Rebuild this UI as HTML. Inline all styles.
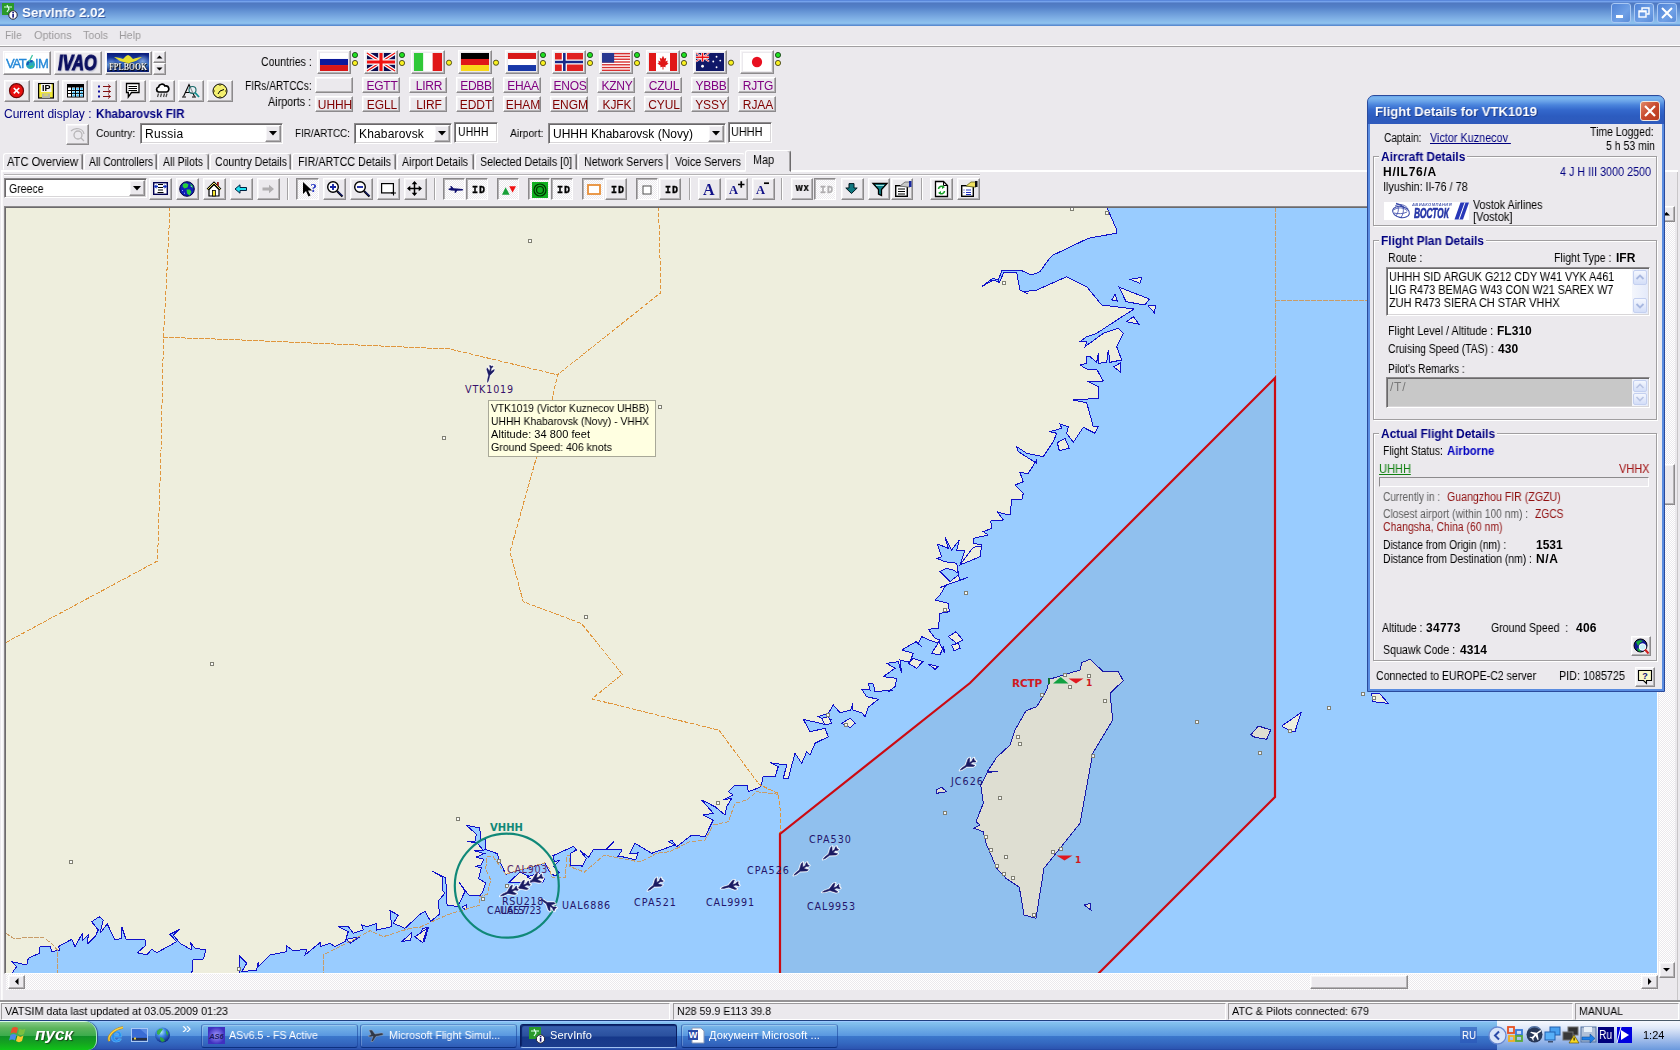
<!DOCTYPE html>
<html lang="ru"><head><meta charset="utf-8"><title>ServInfo 2.02</title>
<style>
*{box-sizing:border-box;margin:0;padding:0}
html,body{width:1680px;height:1050px;overflow:hidden;background:#ebe9ed;font-family:"Liberation Sans",sans-serif;font-size:11px;}
#root{position:relative;width:1680px;height:1050px;overflow:hidden;background:#ebe9ed}
.a{position:absolute}
.t{position:absolute;white-space:nowrap;line-height:1.2;will-change:transform;}
.btn{position:absolute;background:#ebe9ed;border:1px solid;border-color:#fff #8c8a8c #8c8a8c #fff;box-shadow:inset -1px -1px 0 #b4b2b4, inset 1px 1px 0 #f6f5f7;}
.sunk{position:absolute;border:1px solid;border-color:#8c8a8c #fff #fff #8c8a8c;box-shadow:inset 1px 1px 0 #6a686a, inset -1px -1px 0 #d8d6d8;background:#fff}
.flat{position:absolute;border:1px solid;border-color:#9c9a9c #fff #fff #9c9a9c;}
.grp{position:absolute;border:1px solid #a09ea0;box-shadow:1px 1px 0 #fff, inset 1px 1px 0 #fff;}
.hatch{background-color:#f5f4f6;background-image:repeating-conic-gradient(#fff 0 25%,#ebe9ed 0 50%);background-size:2px 2px;}
svg{position:absolute;overflow:visible}
</style></head>
<body><div id="root">
<div class="a" style="left:0;top:0;width:1680px;height:26px;background:linear-gradient(#3a68c8 0,#7aa8f0 1px,#6f9ce6 2px,#4f78c0 3px,#5380c8 7px,#6796d6 12px,#7eaee4 18px,#8ec2ee 23px,#86b8ea 24px,#5a8cd0 25px,#5a8cd0 26px)"></div>
<svg style="left:2px;top:3px" width="17" height="17" viewBox="0 0 17 17"><rect x="0" y="0" width="12" height="12" fill="#2a9a2a"/><path d="M2 4h8M5 2l2 4-2 3" stroke="#dfe" stroke-width="1.2" fill="none"/><circle cx="11" cy="12" r="4.2" fill="#fff" stroke="#223" stroke-width="1"/><rect x="10.3" y="11" width="1.6" height="3.6" fill="#12127a"/><rect x="10.3" y="9" width="1.6" height="1.4" fill="#12127a"/></svg>
<div class="t" style="left:22px;top:5px;font-size:13.5px;color:#fff;font-weight:bold;transform:scaleX(0.9876);transform-origin:0 0;text-shadow:1px 1px 0 #3a5fa8;">ServInfo 2.02</div>
<div class="a" style="left:1611px;top:3px;width:20px;height:20px;border:1px solid #a9c8f4;border-radius:3px;background:linear-gradient(135deg,#4f82d6,#6fa0e6 60%,#5a8cd8)"></div>
<div class="a" style="left:1634px;top:3px;width:20px;height:20px;border:1px solid #a9c8f4;border-radius:3px;background:linear-gradient(135deg,#4f82d6,#6fa0e6 60%,#5a8cd8)"></div>
<div class="a" style="left:1657px;top:3px;width:20px;height:20px;border:1px solid #a9c8f4;border-radius:3px;background:linear-gradient(135deg,#4f82d6,#6fa0e6 60%,#5a8cd8)"></div>
<div class="a" style="left:1616px;top:15px;width:7px;height:3px;background:#fff"></div>
<svg style="left:1634px;top:3px" width="20" height="20" viewBox="0 0 20 20"><path d="M8 7.5V5h7v6h-2.5" fill="none" stroke="#fff" stroke-width="1.4"/><rect x="5" y="8" width="7" height="6" fill="none" stroke="#fff" stroke-width="1.4"/><path d="M5 8.6h7" stroke="#fff" stroke-width="1.6"/></svg>
<svg style="left:1657px;top:3px" width="20" height="20" viewBox="0 0 20 20"><path d="M5 5l10 10M15 5L5 15" stroke="#fff" stroke-width="2"/></svg>
<div class="t" style="left:5px;top:28.6px;font-size:11px;color:#9b999b;transform:scaleX(0.9027);transform-origin:0 0;font-size:11.5px;">File</div>
<div class="t" style="left:34px;top:28.6px;font-size:11px;color:#9b999b;transform:scaleX(0.9496);transform-origin:0 0;font-size:11.5px;">Options</div>
<div class="t" style="left:83px;top:28.6px;font-size:11px;color:#9b999b;transform:scaleX(0.9346);transform-origin:0 0;font-size:11.5px;">Tools</div>
<div class="t" style="left:119px;top:28.6px;font-size:11px;color:#9b999b;transform:scaleX(0.9282);transform-origin:0 0;font-size:11.5px;">Help</div>
<div class="a" style="left:0;top:45px;width:1680px;height:1px;background:#fff"></div>
<div class="a" style="left:0;top:46px;width:1680px;height:1px;background:#a09ea0"></div>
<div class="btn" style="left:3px;top:51px;width:48px;height:24px"></div>
<div class="a" style="left:5px;top:53px;width:44px;height:20px;background:#fff"></div>
<div class="t" style="left:6px;top:56px;font-size:13px;color:#2488d8;letter-spacing:-1.3px;-webkit-text-stroke:.35px #2488d8;">VAT</div>
<svg style="left:24px;top:55px" width="13" height="17" viewBox="0 0 13 17"><circle cx="6.500" cy="9.500" r="4.500" fill="#28a8c0"/><path d="M3.500 10a3.500 3.500 0 0 1 5-3.500" stroke="#1850b8" stroke-width="2" fill="none"/><path d="M8.500 0L5 7" stroke="#38c0a0" stroke-width="1.200"/><path d="M6 12l3-1" stroke="#38c070" stroke-width="1.500"/></svg>
<div class="t" style="left:35px;top:56px;font-size:13px;color:#2488d8;letter-spacing:-.5px;-webkit-text-stroke:.35px #2488d8;">IM</div>
<div class="btn" style="left:54px;top:51px;width:48px;height:24px"></div>
<div class="t" style="left:58px;top:50px;font-size:22px;color:#0c1060;font-weight:bold;font-style:italic;transform:scaleX(.74);transform-origin:0 0;text-shadow:1px 1px 2px #8088a8;-webkit-text-stroke:1.1px #0c1060;">IVAO</div>
<div class="btn" style="left:105px;top:51px;width:47px;height:24px"></div>
<div class="a" style="left:107px;top:53px;width:42px;height:19px;background:radial-gradient(circle at 10% 60%,rgba(200,230,255,.55) 0,transparent 18%),radial-gradient(circle at 85% 45%,rgba(200,230,255,.6) 0,transparent 20%),radial-gradient(circle at 30% 40%,rgba(160,200,255,.4) 0,transparent 15%),radial-gradient(circle at 65% 70%,rgba(160,200,255,.35) 0,transparent 16%),linear-gradient(#0a1a78,#1c48b0 45%,#2a68c0 60%,#0a1a70)"></div>
<svg style="left:107px;top:53px" width="42" height="19" viewBox="0 0 42 19"><path d="M7 4c3 0 6 1 9 2l3-3 2-1 2 1 3 3c3-1 6-2 9-2l-6 4-5 1.500-3 1.500-3-1.500-5-1.500z" fill="#e8e030"/></svg>
<div class="t" style="left:108.5px;top:62px;font-size:9.5px;color:#fff;font-weight:bold;transform:scaleX(0.8182);transform-origin:0 0;font-family:'Liberation Serif',serif;text-shadow:0 0 1px #000,0 0 1px #000,1px 1px 0 #000;">FPLBOOK</div>
<div class="btn" style="left:153px;top:51px;width:13px;height:12px"></div>
<div class="btn" style="left:153px;top:63px;width:13px;height:12px"></div>
<svg style="left:153px;top:51px" width="13" height="24" viewBox="0 0 13 24"><path d="M3.5 7.5h6l-3-3zM3.5 16.5h6l-3 3z" fill="#000"/></svg>
<div class="btn" style="left:4px;top:80px;width:26px;height:22px"></div>
<div class="btn" style="left:33px;top:80px;width:26px;height:22px"></div>
<div class="btn" style="left:62px;top:80px;width:26px;height:22px"></div>
<div class="btn" style="left:91px;top:80px;width:26px;height:22px"></div>
<div class="btn" style="left:120px;top:80px;width:26px;height:22px"></div>
<div class="btn" style="left:149px;top:80px;width:26px;height:22px"></div>
<div class="btn" style="left:178px;top:80px;width:26px;height:22px"></div>
<div class="btn" style="left:207px;top:80px;width:26px;height:22px"></div>
<svg style="left:8px;top:83px" width="17" height="16" viewBox="0 0 17 16"><circle cx="8.500" cy="7.700" r="7" fill="#e81010" stroke="#700808" stroke-width="1.200"/><path d="M5.800 5l5.400 5.400M11.200 5l-5.400 5.400" stroke="#fff" stroke-width="1.700"/></svg>
<svg style="left:38px;top:83px" width="16" height="16" viewBox="0 0 16 16"><rect x=".6" y=".6" width="14.800" height="14.400" fill="#f0e838" stroke="#000" stroke-width="1.200"/><rect x="3" y="1" width="10.500" height="8" fill="#f4f4f4"/><rect x="4" y="10.500" width="8" height="4.500" fill="#b8b8a8"/><path d="M6 12h4" stroke="#f0e838"/><text x="8.200" y="8.200" font-size="9" font-weight="bold" text-anchor="middle" font-family="Liberation Sans,sans-serif" fill="#000">IP</text></svg>
<svg style="left:67px;top:84px" width="17" height="14" viewBox="0 0 17 14"><rect x=".5" y=".5" width="16" height="12.500" fill="#fff" stroke="#000"/><rect x="1" y="1" width="15" height="2.500" fill="#000"/><path d="M4.500 1v12M8.500 3v10M12.500 3v10M1 6.500h15M1 9.500h15" stroke="#000" stroke-width="1"/><rect x="5.5" y="4" width="2.200" height="1.800" fill="#30b8f8"/><rect x="5.5" y="7.5" width="2.200" height="1.800" fill="#30b8f8"/><rect x="5.5" y="10.5" width="2.200" height="1.800" fill="#30b8f8"/><rect x="9.5" y="4" width="2.200" height="1.800" fill="#30b8f8"/><rect x="9.5" y="7.5" width="2.200" height="1.800" fill="#30b8f8"/><rect x="9.5" y="10.5" width="2.200" height="1.800" fill="#30b8f8"/><rect x="13.5" y="4" width="2.200" height="1.800" fill="#30b8f8"/><rect x="13.5" y="7.5" width="2.200" height="1.800" fill="#30b8f8"/><rect x="13.5" y="10.5" width="2.200" height="1.800" fill="#30b8f8"/></svg>
<svg style="left:97px;top:83px" width="16" height="16" viewBox="0 0 16 16"><rect x="1" y="2.500" width="2" height="2" fill="#1010a0"/><rect x="1" y="7.500" width="2" height="2" fill="#1010a0"/><rect x="1" y="12.500" width="2" height="2" fill="#1010a0"/><path d="M6 3.500h7.500M6 8.500h7.500M6 13.500h7.500" stroke="#801010" stroke-width="1"/><path d="M11 1.500l2.500 2-2.500 2M11 6.500l2.500 2-2.500 2M11 11.500l2.500 2-2.500 2" stroke="#801010" stroke-width=".9" fill="none"/></svg>
<svg style="left:125px;top:82px" width="16" height="17" viewBox="0 0 16 17"><path d="M1.500 1.500h12.500v9h-7.500l-3.200 4.500v-4.500h-1.800z" fill="#fff" stroke="#000" stroke-width="1.300"/><path d="M3.500 4.500h8.500M3.500 6.500h8.500M3.500 8.500h8.500" stroke="#000" stroke-width="1"/></svg>
<svg style="left:155px;top:84px" width="15" height="14" viewBox="0 0 15 14"><path d="M3.500 8a2.600 2.600 0 0 1 0-5 3.500 3.500 0 0 1 6.500-1 3 3 0 0 1 1.500 6z" fill="#fff" stroke="#000" stroke-width="1.700"/><path d="M3.500 9.500l-1 3.500M6.500 9.500l-1 3.500M9.500 9.500l-1 3.500M12 9.500l-1 3.500" stroke="#505050" stroke-width="1.300"/></svg>
<svg style="left:182px;top:83px" width="19" height="17" viewBox="0 0 19 17"><path d="M1.500 13.500L7 1.500l5.500 12M3.500 9.500h7" stroke="#000" stroke-width="1.100" fill="none"/><path d="M0 14h4M10 14h4" stroke="#000"/><circle cx="10.500" cy="7" r="3.500" fill="#e8f4f8" fill-opacity=".6" stroke="#186868" stroke-width="1.100"/><path d="M13 9.500l4 4.500" stroke="#109090" stroke-width="1.800"/></svg>
<svg style="left:212px;top:83px" width="16" height="16" viewBox="0 0 16 16"><circle cx="8" cy="8" r="7" fill="#f4f070" stroke="#000" stroke-width="1"/><path d="M8 8l4-1.500M8 8l-2 3" stroke="#000" stroke-width="1"/><path d="M8 2v1M8 13v1M2 8h1M13 8h1" stroke="#403000"/></svg>
<div class="t" style="left:3.5px;top:107.1px;font-size:12px;color:#000080;letter-spacing:0.008px;">Current display :</div>
<div class="t" style="left:95.5px;top:107.1px;font-size:12px;color:#000080;font-weight:bold;transform:scaleX(0.9687);transform-origin:0 0;">Khabarovsk FIR</div>
<div class="t" style="left:260.7px;top:55.2px;font-size:12px;color:#000;transform:scaleX(0.8737);transform-origin:0 0;">Countries :</div>
<div class="t" style="left:244.7px;top:79.2px;font-size:12px;color:#000;transform:scaleX(0.8431);transform-origin:0 0;">FIRs/ARTCCs:</div>
<div class="t" style="left:268.3px;top:95.3px;font-size:12px;color:#000;transform:scaleX(0.8977);transform-origin:0 0;">Airports :</div>
<div class="btn" style="left:317px;top:50px;width:34px;height:24px"></div>
<svg style="left:320px;top:53px" width="28" height="18" viewBox="0 0 30 19" preserveAspectRatio="none"><rect width="30" height="19" fill="#fff"/><rect y="6.3" width="30" height="6.4" fill="#0c1a9c"/><rect y="12.700" width="30" height="6.300" fill="#d81818"/></svg>
<svg style="left:351px;top:50px" width="8" height="18" viewBox="0 0 8 18"><circle cx="4" cy="5" r="2.600" fill="#20e020" stroke="#103010" stroke-width=".8"/><circle cx="4" cy="13" r="2.600" fill="#f8f020" stroke="#303010" stroke-width=".8"/></svg>
<div class="btn" style="left:315px;top:77px;width:38px;height:16px"></div>
<div class="btn" style="left:315px;top:96px;width:38px;height:16px"></div>
<div class="t" style="left:234.5px;width:200px;text-align:center;top:97.5px;font-size:12px;color:#800000;letter-spacing:-0.1px;">UHHH</div>
<div class="btn" style="left:364px;top:50px;width:34px;height:24px"></div>
<svg style="left:367px;top:53px" width="28" height="18" viewBox="0 0 30 19" preserveAspectRatio="none"><rect width="30" height="19" fill="#0c0c50"/><path d="M0 0L30 19M30 0L0 19" stroke="#fff" stroke-width="4"/><path d="M0 0L30 19M30 0L0 19" stroke="#f01010" stroke-width="1.500"/><path d="M15 0v19M0 9.500h30" stroke="#fff" stroke-width="6"/><path d="M15 0v19M0 9.500h30" stroke="#f01010" stroke-width="3.400"/></svg>
<svg style="left:398px;top:50px" width="8" height="18" viewBox="0 0 8 18"><circle cx="4" cy="5" r="2.600" fill="#20e020" stroke="#103010" stroke-width=".8"/><circle cx="4" cy="13" r="2.600" fill="#f8f020" stroke="#303010" stroke-width=".8"/></svg>
<div class="btn" style="left:362px;top:77px;width:38px;height:16px"></div>
<div class="btn" style="left:362px;top:96px;width:38px;height:16px"></div>
<div class="t" style="left:281.5px;width:200px;text-align:center;top:78.6px;font-size:12px;color:#800080;letter-spacing:-0.25px;">EGTT</div>
<div class="t" style="left:281.5px;width:200px;text-align:center;top:97.5px;font-size:12px;color:#800000;letter-spacing:-0.1px;">EGLL</div>
<div class="btn" style="left:411px;top:50px;width:34px;height:24px"></div>
<svg style="left:414px;top:53px" width="28" height="18" viewBox="0 0 30 19" preserveAspectRatio="none"><rect width="10" height="19" fill="#30c838"/><rect x="10" width="10" height="19" fill="#fff"/><rect x="20" width="10" height="19" fill="#e01818"/></svg>
<svg style="left:445px;top:50px" width="8" height="18" viewBox="0 0 8 18"><circle cx="4" cy="12.700" r="2.600" fill="#f8f020" stroke="#303010" stroke-width=".8"/></svg>
<div class="btn" style="left:409px;top:77px;width:38px;height:16px"></div>
<div class="btn" style="left:409px;top:96px;width:38px;height:16px"></div>
<div class="t" style="left:328.5px;width:200px;text-align:center;top:78.6px;font-size:12px;color:#800080;letter-spacing:-0.25px;">LIRR</div>
<div class="t" style="left:328.5px;width:200px;text-align:center;top:97.5px;font-size:12px;color:#800000;letter-spacing:-0.1px;">LIRF</div>
<div class="btn" style="left:458px;top:50px;width:34px;height:24px"></div>
<svg style="left:461px;top:53px" width="28" height="18" viewBox="0 0 30 19" preserveAspectRatio="none"><rect width="30" height="6.400" fill="#000"/><rect y="6.300" width="30" height="6.400" fill="#e01818"/><rect y="12.700" width="30" height="6.300" fill="#f8d818"/></svg>
<svg style="left:492px;top:50px" width="8" height="18" viewBox="0 0 8 18"><circle cx="4" cy="12.700" r="2.600" fill="#f8f020" stroke="#303010" stroke-width=".8"/></svg>
<div class="btn" style="left:456px;top:77px;width:38px;height:16px"></div>
<div class="btn" style="left:456px;top:96px;width:38px;height:16px"></div>
<div class="t" style="left:375.5px;width:200px;text-align:center;top:78.6px;font-size:12px;color:#800080;letter-spacing:-0.25px;">EDBB</div>
<div class="t" style="left:375.5px;width:200px;text-align:center;top:97.5px;font-size:12px;color:#800000;letter-spacing:-0.1px;">EDDT</div>
<div class="btn" style="left:505px;top:50px;width:34px;height:24px"></div>
<svg style="left:508px;top:53px" width="28" height="18" viewBox="0 0 30 19" preserveAspectRatio="none"><rect width="30" height="6.400" fill="#d81818"/><rect y="6.300" width="30" height="6.400" fill="#fff"/><rect y="12.700" width="30" height="6.300" fill="#1838a8"/></svg>
<svg style="left:539px;top:50px" width="8" height="18" viewBox="0 0 8 18"><circle cx="4" cy="5" r="2.600" fill="#20e020" stroke="#103010" stroke-width=".8"/><circle cx="4" cy="13" r="2.600" fill="#f8f020" stroke="#303010" stroke-width=".8"/></svg>
<div class="btn" style="left:503px;top:77px;width:38px;height:16px"></div>
<div class="btn" style="left:503px;top:96px;width:38px;height:16px"></div>
<div class="t" style="left:422.5px;width:200px;text-align:center;top:78.6px;font-size:12px;color:#800080;letter-spacing:-0.25px;">EHAA</div>
<div class="t" style="left:422.5px;width:200px;text-align:center;top:97.5px;font-size:12px;color:#800000;letter-spacing:-0.1px;">EHAM</div>
<div class="btn" style="left:552px;top:50px;width:34px;height:24px"></div>
<svg style="left:555px;top:53px" width="28" height="18" viewBox="0 0 30 19" preserveAspectRatio="none"><rect width="30" height="19" fill="#e02020"/><path d="M10 0v19M0 9.500h30" stroke="#fff" stroke-width="5.500"/><path d="M10 0v19M0 9.500h30" stroke="#182888" stroke-width="2.800"/></svg>
<svg style="left:586px;top:50px" width="8" height="18" viewBox="0 0 8 18"><circle cx="4" cy="5" r="2.600" fill="#20e020" stroke="#103010" stroke-width=".8"/><circle cx="4" cy="13" r="2.600" fill="#f8f020" stroke="#303010" stroke-width=".8"/></svg>
<div class="btn" style="left:550px;top:77px;width:38px;height:16px"></div>
<div class="btn" style="left:550px;top:96px;width:38px;height:16px"></div>
<div class="t" style="left:469.5px;width:200px;text-align:center;top:78.6px;font-size:12px;color:#800080;letter-spacing:-0.25px;">ENOS</div>
<div class="t" style="left:469.5px;width:200px;text-align:center;top:97.5px;font-size:12px;color:#800000;letter-spacing:-0.1px;">ENGM</div>
<div class="btn" style="left:599px;top:50px;width:34px;height:24px"></div>
<svg style="left:602px;top:53px" width="28" height="18" viewBox="0 0 30 19" preserveAspectRatio="none"><rect width="30" height="19" fill="#fff"/><rect y="0.00" width="30" height="1.46" fill="#d83030"/><rect y="2.92" width="30" height="1.46" fill="#d83030"/><rect y="5.85" width="30" height="1.46" fill="#d83030"/><rect y="8.77" width="30" height="1.46" fill="#d83030"/><rect y="11.69" width="30" height="1.46" fill="#d83030"/><rect y="14.62" width="30" height="1.46" fill="#d83030"/><rect y="17.54" width="30" height="1.46" fill="#d83030"/><rect width="13" height="10.200" fill="#283890"/></svg>
<svg style="left:633px;top:50px" width="8" height="18" viewBox="0 0 8 18"><circle cx="4" cy="5" r="2.600" fill="#20e020" stroke="#103010" stroke-width=".8"/><circle cx="4" cy="13" r="2.600" fill="#f8f020" stroke="#303010" stroke-width=".8"/></svg>
<div class="btn" style="left:597px;top:77px;width:38px;height:16px"></div>
<div class="btn" style="left:597px;top:96px;width:38px;height:16px"></div>
<div class="t" style="left:516.5px;width:200px;text-align:center;top:78.6px;font-size:12px;color:#800080;letter-spacing:-0.25px;">KZNY</div>
<div class="t" style="left:516.5px;width:200px;text-align:center;top:97.5px;font-size:12px;color:#800000;letter-spacing:-0.1px;">KJFK</div>
<div class="btn" style="left:646px;top:50px;width:34px;height:24px"></div>
<svg style="left:649px;top:53px" width="28" height="18" viewBox="0 0 30 19" preserveAspectRatio="none"><rect width="30" height="19" fill="#fff"/><rect width="7.500" height="19" fill="#e01818"/><rect x="22.500" width="7.500" height="19" fill="#e01818"/><path d="M15 3l1.500 3 2-1-.8 4 2.300-1-.5 2.500 1.500.5-3.500 2.500.5 1.500-2.500-.5v3h-1v-3l-2.500.5.500-1.500-3.500-2.500 1.500-.5-.5-2.500 2.300 1-.8-4 2 1z" fill="#e01818"/></svg>
<svg style="left:680px;top:50px" width="8" height="18" viewBox="0 0 8 18"><circle cx="4" cy="5" r="2.600" fill="#20e020" stroke="#103010" stroke-width=".8"/><circle cx="4" cy="13" r="2.600" fill="#f8f020" stroke="#303010" stroke-width=".8"/></svg>
<div class="btn" style="left:644px;top:77px;width:38px;height:16px"></div>
<div class="btn" style="left:644px;top:96px;width:38px;height:16px"></div>
<div class="t" style="left:563.5px;width:200px;text-align:center;top:78.6px;font-size:12px;color:#800080;letter-spacing:-0.25px;">CZUL</div>
<div class="t" style="left:563.5px;width:200px;text-align:center;top:97.5px;font-size:12px;color:#800000;letter-spacing:-0.1px;">CYUL</div>
<div class="btn" style="left:693px;top:50px;width:34px;height:24px"></div>
<svg style="left:696px;top:53px" width="28" height="18" viewBox="0 0 30 19" preserveAspectRatio="none"><rect width="30" height="19" fill="#101868"/><path d="M0 0L14 9M14 0L0 9" stroke="#fff" stroke-width="2"/><path d="M0 0L14 9M14 0L0 9" stroke="#f01010" stroke-width=".8"/><path d="M7 0v9M0 4.500h14" stroke="#fff" stroke-width="3"/><path d="M7 0v9M0 4.500h14" stroke="#f01010" stroke-width="1.600"/><circle cx="7" cy="14" r="1.500" fill="#fff"/><circle cx="22" cy="4" r="1" fill="#fff"/><circle cx="26" cy="8" r="1" fill="#fff"/><circle cx="22" cy="15" r="1" fill="#fff"/><circle cx="18.500" cy="9" r="1" fill="#fff"/></svg>
<svg style="left:727px;top:50px" width="8" height="18" viewBox="0 0 8 18"><circle cx="4" cy="12.700" r="2.600" fill="#f8f020" stroke="#303010" stroke-width=".8"/></svg>
<div class="btn" style="left:691px;top:77px;width:38px;height:16px"></div>
<div class="btn" style="left:691px;top:96px;width:38px;height:16px"></div>
<div class="t" style="left:610.5px;width:200px;text-align:center;top:78.6px;font-size:12px;color:#800080;letter-spacing:-0.25px;">YBBB</div>
<div class="t" style="left:610.5px;width:200px;text-align:center;top:97.5px;font-size:12px;color:#800000;letter-spacing:-0.1px;">YSSY</div>
<div class="btn" style="left:740px;top:50px;width:34px;height:24px"></div>
<svg style="left:743px;top:53px" width="28" height="18" viewBox="0 0 30 19" preserveAspectRatio="none"><rect width="30" height="19" fill="#fff"/><circle cx="15" cy="9.500" r="5.500" fill="#e81020"/></svg>
<svg style="left:774px;top:50px" width="8" height="18" viewBox="0 0 8 18"><circle cx="4" cy="5" r="2.600" fill="#20e020" stroke="#103010" stroke-width=".8"/><circle cx="4" cy="13" r="2.600" fill="#f8f020" stroke="#303010" stroke-width=".8"/></svg>
<div class="btn" style="left:738px;top:77px;width:38px;height:16px"></div>
<div class="btn" style="left:738px;top:96px;width:38px;height:16px"></div>
<div class="t" style="left:657.5px;width:200px;text-align:center;top:78.6px;font-size:12px;color:#800080;letter-spacing:-0.25px;">RJTG</div>
<div class="t" style="left:657.5px;width:200px;text-align:center;top:97.5px;font-size:12px;color:#800000;letter-spacing:-0.1px;">RJAA</div>
<div class="btn" style="left:66px;top:124px;width:23px;height:21px"></div>
<svg style="left:69px;top:127px" width="17" height="15" viewBox="0 0 17 15"><circle cx="9" cy="8" r="4" fill="none" stroke="#b8b6b8" stroke-width="1.300"/><path d="M2 4c4-4 12-3 13 3M12 11l3 3" stroke="#b8b6b8" stroke-width="1.200" fill="none"/></svg>
<div class="t" style="left:95.7px;top:126.6px;font-size:11.5px;color:#000;transform:scaleX(0.9042);transform-origin:0 0;">Country:</div>
<div class="sunk" style="left:140px;top:123px;width:143px;height:21px"></div><div class="btn" style="left:265px;top:125px;width:16px;height:17px"></div><svg style="left:269px;top:131px" width="8" height="5" viewBox="0 0 8 5"><path d="M0 0h8l-4 4.500z" fill="#000"/></svg><div class="t" style="left:144.6px;top:126.5px;font-size:12px;color:#000;letter-spacing:0.303px;">Russia</div>
<div class="t" style="left:294.5px;top:126.6px;font-size:11.5px;color:#000;transform:scaleX(0.8551);transform-origin:0 0;">FIR/ARTCC:</div>
<div class="sunk" style="left:354px;top:123px;width:98px;height:21px"></div><div class="btn" style="left:434px;top:125px;width:16px;height:17px"></div><svg style="left:438px;top:131px" width="8" height="5" viewBox="0 0 8 5"><path d="M0 0h8l-4 4.500z" fill="#000"/></svg><div class="t" style="left:358.6px;top:126.5px;font-size:12px;color:#000;letter-spacing:0.163px;">Khabarovsk</div>
<div class="sunk" style="left:454px;top:122px;width:44px;height:21px"></div>
<div class="t" style="left:457.5px;top:124.8px;font-size:12px;color:#000;transform:scaleX(0.8798);transform-origin:0 0;">UHHH</div>
<div class="t" style="left:509.5px;top:126.6px;font-size:11.5px;color:#000;transform:scaleX(0.9038);transform-origin:0 0;">Airport:</div>
<div class="sunk" style="left:548px;top:123px;width:178px;height:21px"></div><div class="btn" style="left:708px;top:125px;width:16px;height:17px"></div><svg style="left:712px;top:131px" width="8" height="5" viewBox="0 0 8 5"><path d="M0 0h8l-4 4.500z" fill="#000"/></svg><div class="t" style="left:552.6px;top:126.5px;font-size:12px;color:#000;transform:scaleX(0.9997);transform-origin:0 0;">UHHH Khabarovsk (Novy)</div>
<div class="sunk" style="left:728px;top:122px;width:44px;height:21px"></div>
<div class="t" style="left:731px;top:124.8px;font-size:12px;color:#000;transform:scaleX(0.9087);transform-origin:0 0;">UHHH</div>
<div class="a" style="left:1px;top:170px;width:1677px;height:2px;background:#fff"></div>
<div class="a" style="left:3px;top:153px;width:80px;height:17px;border:1px solid;border-color:#fff #757375 transparent #fff;border-radius:3px 3px 0 0;box-shadow:inset -1px 0 0 #a8a6a8"></div>
<div class="a" style="left:84px;top:153px;width:73px;height:17px;border:1px solid;border-color:#fff #757375 transparent #fff;border-radius:3px 3px 0 0;box-shadow:inset -1px 0 0 #a8a6a8"></div>
<div class="a" style="left:158px;top:153px;width:51px;height:17px;border:1px solid;border-color:#fff #757375 transparent #fff;border-radius:3px 3px 0 0;box-shadow:inset -1px 0 0 #a8a6a8"></div>
<div class="a" style="left:210px;top:153px;width:81px;height:17px;border:1px solid;border-color:#fff #757375 transparent #fff;border-radius:3px 3px 0 0;box-shadow:inset -1px 0 0 #a8a6a8"></div>
<div class="a" style="left:292px;top:153px;width:104px;height:17px;border:1px solid;border-color:#fff #757375 transparent #fff;border-radius:3px 3px 0 0;box-shadow:inset -1px 0 0 #a8a6a8"></div>
<div class="a" style="left:397px;top:153px;width:77px;height:17px;border:1px solid;border-color:#fff #757375 transparent #fff;border-radius:3px 3px 0 0;box-shadow:inset -1px 0 0 #a8a6a8"></div>
<div class="a" style="left:475px;top:153px;width:102px;height:17px;border:1px solid;border-color:#fff #757375 transparent #fff;border-radius:3px 3px 0 0;box-shadow:inset -1px 0 0 #a8a6a8"></div>
<div class="a" style="left:578px;top:153px;width:90px;height:17px;border:1px solid;border-color:#fff #757375 transparent #fff;border-radius:3px 3px 0 0;box-shadow:inset -1px 0 0 #a8a6a8"></div>
<div class="a" style="left:669px;top:153px;width:76px;height:17px;border:1px solid;border-color:#fff transparent transparent #fff;border-radius:3px 3px 0 0;"></div>
<div class="t" style="left:7px;top:155px;font-size:12px;color:#000;transform:scaleX(0.9287);transform-origin:0 0;">ATC Overview</div>
<div class="t" style="left:89px;top:155px;font-size:12px;color:#000;transform:scaleX(0.8568);transform-origin:0 0;">All Controllers</div>
<div class="t" style="left:163px;top:155px;font-size:12px;color:#000;transform:scaleX(0.8693);transform-origin:0 0;">All Pilots</div>
<div class="t" style="left:215px;top:155px;font-size:12px;color:#000;transform:scaleX(0.8777);transform-origin:0 0;">Country Details</div>
<div class="t" style="left:298px;top:155px;font-size:12px;color:#000;transform:scaleX(0.8960);transform-origin:0 0;">FIR/ARTCC Details</div>
<div class="t" style="left:402px;top:155px;font-size:12px;color:#000;transform:scaleX(0.8758);transform-origin:0 0;">Airport Details</div>
<div class="t" style="left:480px;top:155px;font-size:12px;color:#000;transform:scaleX(0.8898);transform-origin:0 0;">Selected Details [0]</div>
<div class="t" style="left:584px;top:155px;font-size:12px;color:#000;transform:scaleX(0.8907);transform-origin:0 0;">Network Servers</div>
<div class="t" style="left:675px;top:155px;font-size:12px;color:#000;transform:scaleX(0.8915);transform-origin:0 0;">Voice Servers</div>
<div class="a" style="left:745px;top:150px;width:46px;height:22px;background:#ebe9ed;border:1px solid;border-color:#fff #6c6a6c transparent #fff;border-radius:3px 3px 0 0;box-shadow:inset -1px 0 0 #a8a6a8"></div>
<div class="t" style="left:753px;top:153px;font-size:12px;color:#000;transform:scaleX(0.8996);transform-origin:0 0;">Map</div>
<div class="a" style="left:4px;top:174px;width:976px;height:1px;background:#b4b2b4"></div><div class="a" style="left:4px;top:175px;width:976px;height:1px;background:#fff"></div>
<div class="sunk" style="left:4px;top:178px;width:143px;height:20px"></div><div class="btn" style="left:129px;top:180px;width:16px;height:16px"></div><svg style="left:133px;top:186px" width="8" height="5" viewBox="0 0 8 5"><path d="M0 0h8l-4 4.500z" fill="#000"/></svg><div class="t" style="left:8.6px;top:181.8px;font-size:12px;color:#000;transform:scaleX(0.8767);transform-origin:0 0;">Greece</div>
<div class="btn" style="left:149px;top:178px;width:23px;height:22px"></div>
<div class="btn" style="left:176px;top:178px;width:23px;height:22px"></div>
<div class="btn" style="left:203px;top:178px;width:23px;height:22px"></div>
<div class="btn" style="left:230px;top:178px;width:23px;height:22px"></div>
<div class="btn" style="left:257px;top:178px;width:23px;height:22px"></div>
<svg style="left:153px;top:182px" width="15" height="13" viewBox="0 0 15 13"><rect x=".7" y=".7" width="13.600" height="11.600" fill="#fff" stroke="#000050" stroke-width="1.400"/><path d="M5 2.500h5M5 5.500h5M5 8h5M4.500 10.500h6" stroke="#000" stroke-width="1"/><path d="M1.500 4.500h3.500M10 4.500h3.500" stroke="#1030c0" stroke-width="1.400"/><path d="M1.300 4.500l2.200-2.200v4.400zM13.700 4.500l-2.200-2.200v4.400z" fill="#1030c0"/></svg>
<svg style="left:179px;top:181px" width="16" height="16" viewBox="0 0 16 16"><circle cx="8" cy="8" r="7.300" fill="#1020b8" stroke="#000040" stroke-width="1"/><path d="M4 3c2-1.500 4.500-.5 5.500.5l-1 3-3 1-2-2zM7.500 8.500l3.500 0 1.500 2.500-2 3.500-2.500-2zM11 2.500l2.500 2 .5 3-2-2z" fill="#28d038"/><path d="M3 9l1 1M5 12l1 .5M12 5l.5 1" stroke="#c0d0ff" stroke-width=".8"/></svg>
<svg style="left:206px;top:181px" width="16" height="16" viewBox="0 0 16 16"><path d="M3 8.500L8 3.500l5 5v6.500h-10z" fill="#fff" stroke="#000" stroke-width="1.200"/><path d="M1.500 8.500L8 2l6.500 6.500" fill="none" stroke="#000" stroke-width="2.400"/><path d="M1.500 8.500L8 2l6.500 6.500" fill="none" stroke="#f0e468" stroke-width="1"/><rect x="6.500" y="9.500" width="3" height="5.500" fill="#f8e830" stroke="#000" stroke-width=".8"/><rect x="11" y="1" width="1.800" height="4" fill="#901818"/></svg>
<svg style="left:234px;top:184px" width="14" height="10" viewBox="0 0 14 10"><path d="M1 5L6 .8v2.700h6.500v3h-6.500v2.700z" fill="#20e0f0" stroke="#002040" stroke-width="1"/></svg>
<svg style="left:261px;top:184px" width="14" height="10" viewBox="0 0 14 10"><path d="M13 5L8 .8v2.700h-6.500v3h6.500v2.700z" fill="#b0aeb0"/></svg>
<div class="a" style="left:287px;top:178px;width:2px;height:22px;border-left:1px solid #a5a3a5;border-right:1px solid #fff"></div>
<div class="a hatch" style="left:296px;top:178px;width:23px;height:22px;border:1px solid;border-color:#8c8a8c #fff #fff #8c8a8c;box-shadow:inset 1px 1px 0 #b4b2b4"></div>
<div class="btn" style="left:323px;top:178px;width:23px;height:22px"></div>
<div class="btn" style="left:350px;top:178px;width:23px;height:22px"></div>
<div class="btn" style="left:377px;top:178px;width:23px;height:22px"></div>
<div class="btn" style="left:404px;top:178px;width:23px;height:22px"></div>
<svg style="left:300px;top:181px" width="18" height="17" viewBox="0 0 18 17"><path d="M3 1v12l3-3 2.500 5.500 2-1-2.500-5h4z" fill="#000"/><text x="10.500" y="11" font-size="12.500" font-weight="bold" fill="#2030c0" font-family="Liberation Serif,serif">?</text></svg>
<svg style="left:326px;top:180px" width="18" height="18" viewBox="0 0 18 18"><circle cx="7" cy="7" r="5.300" fill="#fff" stroke="#000" stroke-width="1.400"/><path d="M4 7h6M7 4v6" stroke="#1020a0" stroke-width="1.800"/><path d="M11 11l5.500 5.500" stroke="#000" stroke-width="2.200"/><path d="M12 11.500l4.500 4.500" stroke="#2030b0" stroke-width="1"/></svg>
<svg style="left:353px;top:180px" width="18" height="18" viewBox="0 0 18 18"><circle cx="7" cy="7" r="5.300" fill="#fff" stroke="#000" stroke-width="1.400"/><path d="M4 7h6" stroke="#1020a0" stroke-width="1.800"/><path d="M11 11l5.500 5.500" stroke="#000" stroke-width="2.200"/><path d="M12 11.500l4.500 4.500" stroke="#2030b0" stroke-width="1"/></svg>
<svg style="left:381px;top:183px" width="16" height="14" viewBox="0 0 16 14"><rect x=".6" y=".6" width="11.800" height="9.300" fill="#fff" stroke="#000" stroke-width="1.200"/><path d="M10 10h5M12.500 7.500v5" stroke="#000" stroke-width="1.100"/></svg>
<svg style="left:407px;top:181px" width="15" height="15" viewBox="0 0 15 15"><path d="M7.500 1.500v12M1.500 7.500h12" stroke="#000" stroke-width="1.500"/><path d="M7.500 0l-2.800 3.300h5.600zM7.500 15l-2.800-3.300h5.600zM0 7.500l3.300-2.800v5.600zM15 7.500l-3.300-2.800v5.600z" fill="#000"/></svg>
<div class="a" style="left:434px;top:178px;width:2px;height:22px;border-left:1px solid #a5a3a5;border-right:1px solid #fff"></div>
<div class="a hatch" style="left:443px;top:178px;width:22px;height:22px;border:1px solid;border-color:#8c8a8c #fff #fff #8c8a8c;box-shadow:inset 1px 1px 0 #b4b2b4"></div>
<div class="a hatch" style="left:466px;top:178px;width:22px;height:22px;border:1px solid;border-color:#8c8a8c #fff #fff #8c8a8c;box-shadow:inset 1px 1px 0 #b4b2b4"></div>
<svg style="left:448px;top:185px" width="16" height="9" viewBox="0 0 16 9"><path d="M.5 3.800l2.500-.8-.8-2 1.200 0 2.200 2.300 3.500.2 5 .5c1.500.3 1.500 1.200 0 1.400l-5 .3-1.200 2-1.300.2.300-2.200-3.800-.2-2.500-.8z" fill="#101070"/></svg>
<div class="t" style="left:471.5px;top:184.5px;font-size:10px;color:#000;font-weight:bold;letter-spacing:1.000px;font-family:'Liberation Mono',monospace;-webkit-text-stroke:.3px;">ID</div>
<div class="a hatch" style="left:497px;top:178px;width:22px;height:22px;border:1px solid;border-color:#8c8a8c #fff #fff #8c8a8c;box-shadow:inset 1px 1px 0 #b4b2b4"></div>
<svg style="left:501px;top:182px" width="16" height="14" viewBox="0 0 16 14"><path d="M1 12.700l3.600-7.500 4 7.500z" fill="#18a038"/><path d="M8.200 4.300h6.800l-3.400 6.100z" fill="#f01010"/></svg>
<div class="a hatch" style="left:528px;top:178px;width:22px;height:22px;border:1px solid;border-color:#8c8a8c #fff #fff #8c8a8c;box-shadow:inset 1px 1px 0 #b4b2b4"></div>
<div class="a hatch" style="left:551px;top:178px;width:22px;height:22px;border:1px solid;border-color:#8c8a8c #fff #fff #8c8a8c;box-shadow:inset 1px 1px 0 #b4b2b4"></div>
<svg style="left:532px;top:182px" width="16" height="16" viewBox="0 0 16 16"><rect width="16" height="16" fill="#10b020"/><circle cx="8" cy="8" r="6" fill="none" stroke="#003000" stroke-width="1.200"/><circle cx="8" cy="8" r="3.500" fill="none" stroke="#003000" stroke-width="1.200"/></svg>
<div class="t" style="left:556.5px;top:184.5px;font-size:10px;color:#000;font-weight:bold;letter-spacing:1.000px;font-family:'Liberation Mono',monospace;-webkit-text-stroke:.3px;">ID</div>
<div class="a hatch" style="left:582px;top:178px;width:22px;height:22px;border:1px solid;border-color:#8c8a8c #fff #fff #8c8a8c;box-shadow:inset 1px 1px 0 #b4b2b4"></div>
<div class="btn" style="left:605px;top:178px;width:22px;height:22px"></div>
<svg style="left:587px;top:184px" width="14" height="11" viewBox="0 0 14 11"><rect x="1" y="1" width="12" height="9" fill="#fff" stroke="#e89038" stroke-width="1.800"/></svg>
<div class="t" style="left:610.5px;top:184.5px;font-size:10px;color:#000;font-weight:bold;letter-spacing:1.000px;font-family:'Liberation Mono',monospace;-webkit-text-stroke:.3px;">ID</div>
<div class="a hatch" style="left:636px;top:178px;width:22px;height:22px;border:1px solid;border-color:#8c8a8c #fff #fff #8c8a8c;box-shadow:inset 1px 1px 0 #b4b2b4"></div>
<div class="btn" style="left:659px;top:178px;width:22px;height:22px"></div>
<svg style="left:642px;top:185px" width="10" height="10" viewBox="0 0 10 10"><rect x="1" y="1" width="8" height="8" fill="#fff" stroke="#505050" stroke-width="1"/></svg>
<div class="t" style="left:664.5px;top:184.5px;font-size:10px;color:#000;font-weight:bold;letter-spacing:1.000px;font-family:'Liberation Mono',monospace;-webkit-text-stroke:.3px;">ID</div>
<div class="a" style="left:689px;top:178px;width:2px;height:22px;border-left:1px solid #a5a3a5;border-right:1px solid #fff"></div>
<div class="btn" style="left:698px;top:178px;width:23px;height:22px"></div>
<div class="btn" style="left:725px;top:178px;width:23px;height:22px"></div>
<div class="btn" style="left:752px;top:178px;width:23px;height:22px"></div>
<div class="t" style="left:702.5px;top:179.5px;font-size:16px;color:#101088;font-weight:bold;font-family:'Liberation Serif',serif;">A</div>
<div class="t" style="left:729px;top:183px;font-size:12.5px;color:#101088;font-weight:bold;font-family:'Liberation Serif',serif;">A</div>
<div class="t" style="left:756px;top:183px;font-size:12.5px;color:#101088;font-weight:bold;font-family:'Liberation Serif',serif;">A</div>
<svg style="left:738px;top:181px" width="7" height="7" viewBox="0 0 7 7"><path d="M0 3.500h6.500M3.250 .2v6.500" stroke="#000" stroke-width="1.700"/></svg>
<svg style="left:764px;top:182px" width="6" height="3" viewBox="0 0 6 3"><path d="M0 1.200h5" stroke="#000" stroke-width="1.700"/></svg>
<div class="a" style="left:781px;top:178px;width:2px;height:22px;border-left:1px solid #a5a3a5;border-right:1px solid #fff"></div>
<div class="btn" style="left:791px;top:178px;width:22px;height:22px"></div>
<div class="a hatch" style="left:814px;top:178px;width:22px;height:22px;border:1px solid;border-color:#8c8a8c #fff #fff #8c8a8c;box-shadow:inset 1px 1px 0 #b4b2b4"></div>
<div class="btn" style="left:841px;top:178px;width:23px;height:22px"></div>
<div class="btn" style="left:868px;top:178px;width:22px;height:22px"></div>
<div class="btn" style="left:891px;top:178px;width:22px;height:22px"></div>
<div class="t" style="left:795px;top:182px;font-size:10px;color:#000;font-weight:bold;font-family:'DejaVu Sans',sans-serif;transform:scaleX(0.8924);transform-origin:0 0;">wx</div>
<div class="t" style="left:819.5px;top:184.5px;font-size:10px;color:#b0aeb0;font-weight:bold;letter-spacing:1.000px;font-family:'Liberation Mono',monospace;-webkit-text-stroke:.3px;text-shadow:1px 1px 0 #fff;">ID</div>
<svg style="left:845px;top:183px" width="13" height="11" viewBox="0 0 13 11"><path d="M4 .6h5v4.400h3.200l-5.700 5.500-5.700-5.500h3.200z" fill="#107880" stroke="#001820" stroke-width="1"/></svg>
<svg style="left:872px;top:182px" width="16" height="15" viewBox="0 0 16 15"><path d="M1 1.500h14l-5.500 6v6l-3-1.500v-4.500z" fill="#108088" stroke="#000" stroke-width="1.300"/><path d="M4 3.500h8" stroke="#a0e0e0" stroke-width="1"/></svg>
<svg style="left:894px;top:180px" width="18" height="18" viewBox="0 0 18 18"><rect x="1.700" y="5.700" width="11.600" height="10.600" fill="#fff" stroke="#000" stroke-width="1.400"/><path d="M4 9h7M4 11.500h7M4 14h7" stroke="#000"/><path d="M6 6l5-4 5 0v5l-3 0z" fill="#c8c8c8" stroke="#606060" stroke-width=".8"/><rect x="15" y="1" width="2.500" height="6" fill="#1828a0"/></svg>
<div class="a" style="left:921px;top:178px;width:2px;height:22px;border-left:1px solid #a5a3a5;border-right:1px solid #fff"></div>
<div class="btn" style="left:930px;top:178px;width:23px;height:22px"></div>
<div class="btn" style="left:957px;top:178px;width:23px;height:22px"></div>
<svg style="left:934px;top:180px" width="15" height="18" viewBox="0 0 15 18"><path d="M1.500 1.500h8l4 4v11h-12z" fill="#fff" stroke="#000" stroke-width="1.300"/><path d="M9.500 1.500v4h4" fill="none" stroke="#000"/><path d="M4.500 9a3 3 0 0 1 5-2M10.500 11a3 3 0 0 1-5 2" fill="none" stroke="#18a028" stroke-width="1.600"/><path d="M8 5.500l3 1.500-3 2zM7 14.500l-3-1.500 3-2z" fill="#18a028"/></svg>
<svg style="left:960px;top:180px" width="18" height="18" viewBox="0 0 18 18"><rect x="1.700" y="5.700" width="11.600" height="10.600" fill="#fff" stroke="#000" stroke-width="1.400"/><path d="M6 10h5M6 12.500h5M6 14.500h5" stroke="#2030c0"/><path d="M3.500 10h1M3.500 12.500h1" stroke="#2030c0"/><path d="M6 6l5-4 5 0v5l-3 0z" fill="#f0e060" stroke="#606020" stroke-width=".8"/><rect x="15" y="1" width="2.500" height="6" fill="#101010"/></svg>
<div class="a" style="left:4px;top:206px;width:1654px;height:768px;border:1px solid;border-color:#8c8a8c #fff #fff #8c8a8c;box-shadow:inset 1px 1px 0 #6c6a6c"></div>
<svg style="left:6px;top:208px;overflow:hidden" width="1651" height="765" viewBox="6 208 1651 765"><rect x="0" y="200" width="1700" height="800" fill="#99ccff"/><path d="M1275 378 L970 683 L780 834 L780 980 L1092 980 L1275 797Z" fill="#90c0ee"/><path d="M0 200 L1106.7 206.7 L1116 228.3 L1116 233.3 L1088.3 238.3 L1053.3 255 L1048.3 260 L1040 271.7 L1031.7 275 L1021.7 270.7 L1001.7 271 L998.3 280 L992.7 278.3 L981.7 286.7 L993.3 280 L999.3 282.3 L1004 272.3 L1016.7 272.7 L1020 290 L1028.3 294.3 L1023.3 291.7 L1036.7 290 L1066.7 276.7 L1086.7 286.7 L1101.7 305 L1134 309 L1106.7 326.7 L1096.7 333.3 L1086.7 336.7 L1080 341.7 L1086.7 341.7 L1085 346.7 L1103.3 333.3 L1118.3 328.3 L1123.3 333.3 L1116.7 346.7 L1121.7 360 L1110 362.3 L1108.3 350 L1106.7 362.3 L1098.3 363.3 L1098.3 353.3 L1096.7 362.3 L1090 356.7 L1086.7 356.7 L1086.7 363.3 L1080 365 L1088.3 370 L1096.7 369.3 L1103.3 381 L1088.3 381.7 L1098.3 386.7 L1098.3 398.3 L1073.3 400 L1086.7 402.7 L1093.3 426.7 L1098.3 426.7 L1095 433.3 L1083.3 427.3 L1073.3 442.3 L1066.7 433.3 L1068.3 426.7 L1060 424 L1061.7 428.3 L1050 431.7 L1056.7 433.3 L1053.3 441.7 L1043.3 456.7 L1026.7 453.3 L1016.7 446.7 L1018.3 451.7 L1036.7 463.3 L1036.7 460 L1028.3 473.3 L1020 472.7 L1023.3 481.7 L1015 485 L1023.3 493.3 L1021.7 500 L1011.7 499.3 L1010 515 L1001.7 513.3 L997.3 511.7 L1003.3 520 L990.7 521 L991.7 528.3 L983.3 531.7 L988.3 535 L973.3 538.3 L973.3 543.3 L981.7 545 L980 556.7 L960 565 L965 550 L956.7 550 L959.3 540 L951.7 550 L945 537.3 L948.3 548.3 L937.3 544 L941.7 556.7 L936.7 558.3 L945 561.7 L956.7 563.3 L958.3 573.3 L953.3 570 L946.7 568.3 L940 571.7 L950 581.7 L958.3 575 L960 580 L968.3 577.3 L940 587.3 L945 586.7 L940 595 L935 600 L948.3 603.3 L949.3 611.7 L940 613.3 L938.3 628.3 L928.3 629.3 L935 638.3 L940 640 L931.7 653.3 L940 655 L943.3 646.7 L945 653.3 L939.3 642.7 L933.3 641.7 L921.7 636.7 L918.3 643.3 L921.7 646.7 L916 641.7 L901.7 650 L913.3 653.3 L910 661.7 L906.7 661.7 L900 660 L901.7 673.3 L898.3 661.7 L886.7 663.3 L895 668.3 L883.3 676.7 L896.7 678.3 L895 686.7 L888.3 691.7 L893.3 690 L875 691.7 L873.3 684 L868.3 683.3 L870 690 L861.7 689.3 L866.7 696.7 L878.3 699.3 L868.3 707.3 L865 716.7 L861.7 712.7 L852.7 710 L852.7 703.3 L850.7 710 L840 712.7 L833.3 705 L828.3 713.3 L818.3 716.7 L825 720 L831.7 719.3 L826.7 725 L820 723.3 L803.3 719.3 L810 731.7 L825 728.3 L828.3 736.7 L815 743.3 L810 755 L806.7 751.7 L801.7 763.3 L795 753.3 L788.3 778.3 L783.3 778.3 L786.7 765 L770 762.7 L778.3 766.7 L775 776.7 L763.3 776 L761.7 783.3 L760 787.3 L748.3 791.7 L747.3 785 L735 785 L728.3 791.7 L733.3 795 L723.3 800 L731.7 798.3 L726.7 806.7 L725 815 L715 806.7 L701.7 800 L713.3 813.3 L703.3 815 L713.3 820 L705 836.7 L691.7 835 L676.7 846.7 L671.7 840 L668.3 841.7 L675 845 L651.7 853.3 L635 843.3 L634.3 844.3 L631.4 850 L630 853.6 L637.9 852.9 L635.7 860 L624.3 857.1 L617.9 856.4 L622.1 850 L607.1 849.3 L614.3 841.4 L605.7 850 L593.6 849.3 L588.6 857.1 L580 850.7 L586.4 858.6 L582.1 867.1 L581.4 865 L570 865 L570 853.6 L576.4 850 L573.6 846.4 L552.9 855.7 L554.3 861.4 L559.3 860.7 L553.6 866.4 L557.1 870 L559.3 872.1 L555.7 875.7 L551.4 874.3 L548.6 870 L545 862.9 L541.4 864.3 L520 870 L505.7 874.3 L499.3 860 L497.1 853.6 L485 849.3 L485.7 839.3 L480 840 L480.7 834.3 L479.3 827.9 L466.4 825.3 L476.4 834.3 L475 841.4 L467.1 841.4 L477.1 842.9 L483.6 850.7 L474.3 850.7 L484.3 853.6 L476.4 857.1 L483.6 859.3 L481.4 865 L475 866.4 L481.4 867.9 L478.6 878.6 L485.7 882.9 L482.9 891.4 L480 895.7 L469.3 895.7 L459.3 882.6 L465 891.4 L457.9 906.4 L447.1 905.4 L445.7 877.9 L432.1 871 L442.1 877.1 L442.9 890.7 L445 892.9 L438.6 900.7 L439.3 914.3 L430.7 921.4 L425 911.4 L420 914.3 L405 928.3 L393.3 923.3 L398.3 915 L390 910.7 L391.7 926.7 L376.7 930 L376.7 923.3 L366.7 926.7 L361.7 925 L363.3 930 L353.3 933.3 L348.3 926.7 L338.3 926.7 L348.3 931.7 L345 941.7 L335 946.7 L330 943.3 L320 946.7 L320 942.7 L315 946.7 L305 955 L306.7 949.3 L293.3 950.7 L286.7 946 L286.7 951.7 L270 955 L258.3 966.7 L258.3 961.7 L256.7 970 L241.7 971.7 L246.7 963.3 L239.3 956 L240 976.7 L191.7 976.7 L192.7 960 L203.3 959 L206 950 L195 948.3 L190.7 942.7 L191.7 950 L180 943.3 L173.3 935 L180 929.3 L170 934.3 L176.7 941.7 L156.7 952.7 L151.7 949.3 L146.7 955 L137.3 952.7 L146 945 L145 940 L126 939.3 L121.7 926.7 L121.7 938.3 L115 940 L107.3 924 L100 933.3 L103.3 920 L99.3 916.7 L91.7 921.7 L98.3 930 L95 936.7 L87.3 944 L88.3 935 L82.7 940 L82.7 932.7 L75 946.7 L71.7 939.3 L58.3 946.7 L60 950 L51.7 951.7 L50 946 L40 946.7 L39.3 953.3 L28.3 958.3 L26.7 965 L11.7 961.7 L16.7 966.7 L9.3 976.7 L0 980Z" fill="#eeeedd" stroke="#1010c8" stroke-width="1" stroke-linejoin="miter" shape-rendering="crispEdges"/><path d="M1130 279.3 L1141.7 277.3 L1140 283.3Z" fill="#eeeedd" stroke="#1010c8" stroke-width="1" shape-rendering="crispEdges"/><path d="M1119.3 287.3 L1149.3 299 L1145 305 L1126 301.7Z" fill="#eeeedd" stroke="#1010c8" stroke-width="1" shape-rendering="crispEdges"/><path d="M1148.3 306 L1155.7 305.7 L1154.3 312.7Z" fill="#eeeedd" stroke="#1010c8" stroke-width="1" shape-rendering="crispEdges"/><path d="M1111.7 300 L1115 294.3 L1117.3 301Z" fill="#eeeedd" stroke="#1010c8" stroke-width="1" shape-rendering="crispEdges"/><path d="M1126.7 321.7 L1133.3 316.7 L1139 324.3Z" fill="#eeeedd" stroke="#1010c8" stroke-width="1" shape-rendering="crispEdges"/><path d="M1113.3 366.7 L1120 363.3 L1120 371.7Z" fill="#eeeedd" stroke="#1010c8" stroke-width="1" shape-rendering="crispEdges"/><path d="M1057.3 442.7 L1065 438.3 L1069.3 448.3 L1059.3 450.7Z" fill="#eeeedd" stroke="#1010c8" stroke-width="1" shape-rendering="crispEdges"/><path d="M948.3 636.7 L956 631.7 L962.7 640 L956.7 643.3Z" fill="#eeeedd" stroke="#1010c8" stroke-width="1" shape-rendering="crispEdges"/><path d="M951.7 645 L958.3 643.3 L960 648.3 L954 650.7Z" fill="#eeeedd" stroke="#1010c8" stroke-width="1" shape-rendering="crispEdges"/><path d="M913.3 658.3 L922.7 661.7 L916.7 668.3 L908.3 663.3Z" fill="#eeeedd" stroke="#1010c8" stroke-width="1" shape-rendering="crispEdges"/><path d="M928.3 664 L938.3 666.7 L935 669.3Z" fill="#eeeedd" stroke="#1010c8" stroke-width="1" shape-rendering="crispEdges"/><path d="M841.7 723.3 L850 718.3 L855 723.3 L850 727.7Z" fill="#eeeedd" stroke="#1010c8" stroke-width="1" shape-rendering="crispEdges"/><path d="M960 565 L973.3 547.3 L981.7 546 L980 556.7Z" fill="#eeeedd" stroke="#1010c8" stroke-width="1" shape-rendering="crispEdges"/><path d="M821.7 718.3 L828.3 716.7 L831.7 723.3 L825 725Z" fill="#eeeedd" stroke="#1010c8" stroke-width="1" shape-rendering="crispEdges"/><path d="M508.6 882.6 L520 872.1 L542.9 882.6Z" fill="#eeeedd" stroke="#1010c8" stroke-width="1" shape-rendering="crispEdges"/><path d="M527.1 877.1 L538.6 872.9 L545 877.9 L542.9 882.6 L532.9 880Z" fill="#eeeedd" stroke="#1010c8" stroke-width="1" shape-rendering="crispEdges"/><path d="M462.1 907.1 L466.4 905 L466 910Z" fill="#eeeedd" stroke="#1010c8" stroke-width="1" shape-rendering="crispEdges"/><path d="M422.9 928.6 L428.6 927.1 L424.3 941.4 L420 934.3Z" fill="#eeeedd" stroke="#1010c8" stroke-width="1" shape-rendering="crispEdges"/><path d="M401.7 941.7 L411.7 932.7 L410.7 940Z" fill="#eeeedd" stroke="#1010c8" stroke-width="1" shape-rendering="crispEdges"/><path d="M415 936.7 L427.3 928.3 L422.7 942.7Z" fill="#eeeedd" stroke="#1010c8" stroke-width="1" shape-rendering="crispEdges"/><path d="M346.7 939.3 L360 936.7 L350 943.3Z" fill="#eeeedd" stroke="#1010c8" stroke-width="1" shape-rendering="crispEdges"/><path d="M1281.7 726 L1301 712.7 L1295 731.7 L1288.3 730Z" fill="#eeeedd" stroke="#1010c8" stroke-width="1" shape-rendering="crispEdges"/><path d="M1371.7 693.3 L1380 694 L1388.3 703.3 L1372.7 701.7Z" fill="#eeeedd" stroke="#1010c8" stroke-width="1" shape-rendering="crispEdges"/><path d="M1090 659.3 L1081.7 662.7 L1080 670 L1066.7 674 L1049.3 679.3 L1046.7 690 L1036.7 706.7 L1026 710.7 L1015 730 L1010 745 L996.7 757.3 L987.3 771.7 L998.3 771 L987.3 772.7 L980.7 785 L983.3 803.3 L976 821.7 L980 825 L974 828.3 L983.3 831.7 L986 843.3 L996.7 868.3 L1006 878.3 L1019.3 887.3 L1024 915 L1036 918.3 L1044 868.3 L1080 823.3 L1092.7 753.3 L1112.7 720 L1110 693.3 L1123.3 680.7 L1118.3 671.7 L1103.3 671.7Z" fill="#deded2" stroke="#1a1aa8" stroke-width="1" shape-rendering="crispEdges"/><path d="M1250.7 735 L1258.3 726 L1270.7 730 L1266.7 739.3 L1255 737.3Z" fill="#deded2" stroke="#1a1aa8" stroke-width="1" shape-rendering="crispEdges"/><path d="M936 790 L941.7 787.3 L946.7 791.7 L936.7 793.3Z" fill="#deded2" stroke="#1a1aa8" stroke-width="1" shape-rendering="crispEdges"/><path d="M1084.3 905 L1090.7 903.3 L1091 910Z" fill="#deded2" stroke="#1a1aa8" stroke-width="1" shape-rendering="crispEdges"/><path d="M170 207 L167.5 260 L163.5 337.3 L161 450 L157.5 561 L47.5 620 L5 643" fill="none" stroke="#e0963c" stroke-width="1" stroke-dasharray="4.500 1.500" shape-rendering="crispEdges"/><path d="M163.5 337.3 L230 339.5 L450 349 L557.5 374.8" fill="none" stroke="#e0963c" stroke-width="1" stroke-dasharray="4.500 1.500" shape-rendering="crispEdges"/><path d="M658.5 207 L661 292.5 L557.5 374.8 L550 410 L530 480 L510 552 L523.2 601.7 L581.6 623.6 L622.2 674.2 L591.9 698.9 L719.1 730.3 L759 784.3 L769.3 789.4 L778.3 793.3 L780.3 810 L780 833" fill="none" stroke="#e0963c" stroke-width="1" stroke-dasharray="4.500 1.500" shape-rendering="crispEdges"/><path d="M420 927.1 L448.6 914.3 L480 905 L478.6 897.1 L487.1 894.3 L490.7 880 L485.7 868.6 L487.1 856.4 L492.9 856.4 L505.7 874.3 L520 870 L544.3 862.9 L549.3 868.6 L552.1 877.1 L565 877.9 L567.1 855 L569.3 855 L569.3 866.4 L584.3 872.1 L604.3 855 L640 862.1 L656.7 853.3 L670 851.7 L690 841.7 L705 840 L713.3 825 L728.3 821.7 L735 803.3 L746.7 800 L756.7 791.7 L778.3 794.3" fill="none" stroke="#c89c68" stroke-width="1" stroke-dasharray="4.500 1.500" shape-rendering="crispEdges"/><path d="M323.3 976.7 L323.3 955 L346.7 943.3 L370 930.7 L383.3 936.7 L410 928.3 L420.7 927" fill="none" stroke="#c89c68" stroke-width="1" stroke-dasharray="4.500 1.500" shape-rendering="crispEdges"/><path d="M6 933.3 L13.3 938.3 L43.3 937.3 L53.3 945 L57.3 950 L57.3 976.7" fill="none" stroke="#c89c68" stroke-width="1" stroke-dasharray="4.500 1.500" shape-rendering="crispEdges"/><path d="M1275.5 207 L1275.5 378" fill="none" stroke="#c89c68" stroke-width="1" stroke-dasharray="4.500 1.500" shape-rendering="crispEdges"/><path d="M1275 300.5 L1380 300.5" fill="none" stroke="#c89c68" stroke-width="1" stroke-dasharray="4.500 1.500" shape-rendering="crispEdges"/><path d="M780 980 L780 834 L970 683 L1275 378 L1275 797 L1092 980" fill="none" stroke="#cc0a12" stroke-width="2.200" stroke-linejoin="miter"/><rect x="528.5" y="239.5" width="3" height="3" fill="rgba(255,255,255,.85)" stroke="#808074" stroke-width="1" shape-rendering="crispEdges"/><rect x="442.5" y="436.5" width="3" height="3" fill="rgba(255,255,255,.85)" stroke="#808074" stroke-width="1" shape-rendering="crispEdges"/><rect x="658.5" y="405.5" width="3" height="3" fill="rgba(255,255,255,.85)" stroke="#808074" stroke-width="1" shape-rendering="crispEdges"/><rect x="584.5" y="615.5" width="3" height="3" fill="rgba(255,255,255,.85)" stroke="#808074" stroke-width="1" shape-rendering="crispEdges"/><rect x="210.5" y="662.5" width="3" height="3" fill="rgba(255,255,255,.85)" stroke="#808074" stroke-width="1" shape-rendering="crispEdges"/><rect x="69.5" y="860.5" width="3" height="3" fill="rgba(255,255,255,.85)" stroke="#808074" stroke-width="1" shape-rendering="crispEdges"/><rect x="1070.5" y="207.5" width="3" height="3" fill="rgba(255,255,255,.85)" stroke="#808074" stroke-width="1" shape-rendering="crispEdges"/><rect x="1105.5" y="211.5" width="3" height="3" fill="rgba(255,255,255,.85)" stroke="#808074" stroke-width="1" shape-rendering="crispEdges"/><rect x="1002.5" y="281.5" width="3" height="3" fill="rgba(255,255,255,.85)" stroke="#808074" stroke-width="1" shape-rendering="crispEdges"/><rect x="964.5" y="591.5" width="3" height="3" fill="rgba(255,255,255,.85)" stroke="#808074" stroke-width="1" shape-rendering="crispEdges"/><rect x="943.5" y="608.5" width="3" height="3" fill="rgba(255,255,255,.85)" stroke="#808074" stroke-width="1" shape-rendering="crispEdges"/><rect x="826.5" y="713.5" width="3" height="3" fill="rgba(255,255,255,.85)" stroke="#808074" stroke-width="1" shape-rendering="crispEdges"/><rect x="844.5" y="723.5" width="3" height="3" fill="rgba(255,255,255,.85)" stroke="#808074" stroke-width="1" shape-rendering="crispEdges"/><rect x="1063.5" y="673.5" width="3" height="3" fill="rgba(255,255,255,.85)" stroke="#808074" stroke-width="1" shape-rendering="crispEdges"/><rect x="1087.5" y="674.5" width="3" height="3" fill="rgba(255,255,255,.85)" stroke="#808074" stroke-width="1" shape-rendering="crispEdges"/><rect x="1068.5" y="685.5" width="3" height="3" fill="rgba(255,255,255,.85)" stroke="#808074" stroke-width="1" shape-rendering="crispEdges"/><rect x="1040.5" y="693.5" width="3" height="3" fill="rgba(255,255,255,.85)" stroke="#808074" stroke-width="1" shape-rendering="crispEdges"/><rect x="1103.5" y="699.5" width="3" height="3" fill="rgba(255,255,255,.85)" stroke="#808074" stroke-width="1" shape-rendering="crispEdges"/><rect x="1195.5" y="720.5" width="3" height="3" fill="rgba(255,255,255,.85)" stroke="#808074" stroke-width="1" shape-rendering="crispEdges"/><rect x="1016.5" y="735.5" width="3" height="3" fill="rgba(255,255,255,.85)" stroke="#808074" stroke-width="1" shape-rendering="crispEdges"/><rect x="1018.5" y="742.5" width="3" height="3" fill="rgba(255,255,255,.85)" stroke="#808074" stroke-width="1" shape-rendering="crispEdges"/><rect x="1091.5" y="754.5" width="3" height="3" fill="rgba(255,255,255,.85)" stroke="#808074" stroke-width="1" shape-rendering="crispEdges"/><rect x="1258.5" y="751.5" width="3" height="3" fill="rgba(255,255,255,.85)" stroke="#808074" stroke-width="1" shape-rendering="crispEdges"/><rect x="1288.5" y="729.5" width="3" height="3" fill="rgba(255,255,255,.85)" stroke="#808074" stroke-width="1" shape-rendering="crispEdges"/><rect x="1327.5" y="706.5" width="3" height="3" fill="rgba(255,255,255,.85)" stroke="#808074" stroke-width="1" shape-rendering="crispEdges"/><rect x="1361.5" y="692.5" width="3" height="3" fill="rgba(255,255,255,.85)" stroke="#808074" stroke-width="1" shape-rendering="crispEdges"/><rect x="1372.5" y="696.5" width="3" height="3" fill="rgba(255,255,255,.85)" stroke="#808074" stroke-width="1" shape-rendering="crispEdges"/><rect x="998.5" y="796.5" width="3" height="3" fill="rgba(255,255,255,.85)" stroke="#808074" stroke-width="1" shape-rendering="crispEdges"/><rect x="943.5" y="811.5" width="3" height="3" fill="rgba(255,255,255,.85)" stroke="#808074" stroke-width="1" shape-rendering="crispEdges"/><rect x="984.5" y="835.5" width="3" height="3" fill="rgba(255,255,255,.85)" stroke="#808074" stroke-width="1" shape-rendering="crispEdges"/><rect x="989.5" y="848.5" width="3" height="3" fill="rgba(255,255,255,.85)" stroke="#808074" stroke-width="1" shape-rendering="crispEdges"/><rect x="1004.5" y="855.5" width="3" height="3" fill="rgba(255,255,255,.85)" stroke="#808074" stroke-width="1" shape-rendering="crispEdges"/><rect x="995.5" y="864.5" width="3" height="3" fill="rgba(255,255,255,.85)" stroke="#808074" stroke-width="1" shape-rendering="crispEdges"/><rect x="1002.5" y="872.5" width="3" height="3" fill="rgba(255,255,255,.85)" stroke="#808074" stroke-width="1" shape-rendering="crispEdges"/><rect x="1011.5" y="876.5" width="3" height="3" fill="rgba(255,255,255,.85)" stroke="#808074" stroke-width="1" shape-rendering="crispEdges"/><rect x="1051.5" y="850.5" width="3" height="3" fill="rgba(255,255,255,.85)" stroke="#808074" stroke-width="1" shape-rendering="crispEdges"/><rect x="1059.5" y="847.5" width="3" height="3" fill="rgba(255,255,255,.85)" stroke="#808074" stroke-width="1" shape-rendering="crispEdges"/><rect x="1032.5" y="913.5" width="3" height="3" fill="rgba(255,255,255,.85)" stroke="#808074" stroke-width="1" shape-rendering="crispEdges"/><rect x="456.5" y="817.5" width="3" height="3" fill="rgba(255,255,255,.85)" stroke="#808074" stroke-width="1" shape-rendering="crispEdges"/><rect x="716.5" y="801.5" width="3" height="3" fill="rgba(255,255,255,.85)" stroke="#808074" stroke-width="1" shape-rendering="crispEdges"/><rect x="497.5" y="859.5" width="3" height="3" fill="rgba(255,255,255,.85)" stroke="#808074" stroke-width="1" shape-rendering="crispEdges"/><rect x="505.5" y="884.5" width="3" height="3" fill="rgba(255,255,255,.85)" stroke="#808074" stroke-width="1" shape-rendering="crispEdges"/><rect x="481.5" y="897.5" width="3" height="3" fill="rgba(255,255,255,.85)" stroke="#808074" stroke-width="1" shape-rendering="crispEdges"/><rect x="237.5" y="967.5" width="3" height="3" fill="rgba(255,255,255,.85)" stroke="#808074" stroke-width="1" shape-rendering="crispEdges"/><circle cx="506.800" cy="885.700" r="52" fill="none" stroke="#108878" stroke-width="2.200"/><text x="490" y="831" font-family="DejaVu Sans,sans-serif" font-size="10" font-weight="bold" fill="#108878" letter-spacing="0.04">VHHH</text><text x="1012" y="687" font-family="DejaVu Sans,sans-serif" font-size="10.5" font-weight="bold" fill="#d01820" letter-spacing="-0.16">RCTP</text><path d="M1053 683.500L1060.700 677L1068.500 683.500Z" fill="#10a040"/><path d="M1068.500 678.500H1083.500L1076 683.500Z" fill="#e01820"/><rect x="1048" y="678" width="2" height="6" fill="#107030"/><text x="1086" y="686" font-family="DejaVu Sans,sans-serif" font-size="9" font-weight="bold" fill="#d01820" letter-spacing="-2.26">1</text><path d="M1056.500 855.500H1072.500L1064.500 860.500Z" fill="#e01820"/><text x="1075" y="863" font-family="DejaVu Sans,sans-serif" font-size="9" font-weight="bold" fill="#d01820" letter-spacing="-2.26">1</text><g transform="translate(489.5 374) rotate(193) scale(0.632 1.15)"><path d="M0 -7.500L.9 -5.500L1 -1.200L5.800 3.300L5.800 4.800L1 2.400L.8 5L2.600 6.700L2.600 7.500L0 6.900L-2.600 7.500L-2.600 6.700L-.8 5L-1 2.400L-5.800 4.800L-5.800 3.300L-1 -1.200L-.9 -5.500Z" fill="#fff" stroke="#fff" stroke-width="2.600" stroke-linejoin="round" opacity=".9"/><path d="M0 -7.500L.9 -5.500L1 -1.200L5.800 3.300L5.800 4.800L1 2.400L.8 5L2.600 6.700L2.600 7.500L0 6.900L-2.600 7.500L-2.600 6.700L-.8 5L-1 2.400L-5.800 4.800L-5.800 3.300L-1 -1.200L-.9 -5.500Z" fill="#1a1a62" stroke="#1a1a62" stroke-width=".5"/></g><g transform="translate(967.5 765) rotate(235) scale(0.792 1.2)"><path d="M0 -7.500L.9 -5.500L1 -1.200L5.800 3.300L5.800 4.800L1 2.400L.8 5L2.600 6.700L2.600 7.500L0 6.900L-2.600 7.500L-2.600 6.700L-.8 5L-1 2.400L-5.800 4.800L-5.800 3.300L-1 -1.200L-.9 -5.500Z" fill="#fff" stroke="#fff" stroke-width="2.600" stroke-linejoin="round" opacity=".9"/><path d="M0 -7.500L.9 -5.500L1 -1.200L5.800 3.300L5.800 4.800L1 2.400L.8 5L2.600 6.700L2.600 7.500L0 6.900L-2.600 7.500L-2.600 6.700L-.8 5L-1 2.400L-5.800 4.800L-5.800 3.300L-1 -1.200L-.9 -5.500Z" fill="#1a1a62" stroke="#1a1a62" stroke-width=".5"/></g><g transform="translate(830.3 853.7) rotate(232) scale(0.792 1.2)"><path d="M0 -7.500L.9 -5.500L1 -1.200L5.800 3.300L5.800 4.800L1 2.400L.8 5L2.600 6.700L2.600 7.500L0 6.900L-2.600 7.500L-2.600 6.700L-.8 5L-1 2.400L-5.800 4.800L-5.800 3.300L-1 -1.200L-.9 -5.500Z" fill="#fff" stroke="#fff" stroke-width="2.600" stroke-linejoin="round" opacity=".9"/><path d="M0 -7.500L.9 -5.500L1 -1.200L5.800 3.300L5.800 4.800L1 2.400L.8 5L2.600 6.700L2.600 7.500L0 6.900L-2.600 7.500L-2.600 6.700L-.8 5L-1 2.400L-5.800 4.800L-5.800 3.300L-1 -1.200L-.9 -5.500Z" fill="#1a1a62" stroke="#1a1a62" stroke-width=".5"/></g><g transform="translate(801 869.7) rotate(232) scale(0.792 1.2)"><path d="M0 -7.500L.9 -5.500L1 -1.200L5.800 3.300L5.800 4.800L1 2.400L.8 5L2.600 6.700L2.600 7.500L0 6.900L-2.600 7.500L-2.600 6.700L-.8 5L-1 2.400L-5.800 4.800L-5.800 3.300L-1 -1.200L-.9 -5.500Z" fill="#fff" stroke="#fff" stroke-width="2.600" stroke-linejoin="round" opacity=".9"/><path d="M0 -7.500L.9 -5.500L1 -1.200L5.800 3.300L5.800 4.800L1 2.400L.8 5L2.600 6.700L2.600 7.500L0 6.900L-2.600 7.500L-2.600 6.700L-.8 5L-1 2.400L-5.800 4.800L-5.800 3.300L-1 -1.200L-.9 -5.500Z" fill="#1a1a62" stroke="#1a1a62" stroke-width=".5"/></g><g transform="translate(831 889.3) rotate(252) scale(0.792 1.2)"><path d="M0 -7.500L.9 -5.500L1 -1.200L5.800 3.300L5.800 4.800L1 2.400L.8 5L2.600 6.700L2.600 7.500L0 6.900L-2.600 7.500L-2.600 6.700L-.8 5L-1 2.400L-5.800 4.800L-5.800 3.300L-1 -1.200L-.9 -5.500Z" fill="#fff" stroke="#fff" stroke-width="2.600" stroke-linejoin="round" opacity=".9"/><path d="M0 -7.500L.9 -5.500L1 -1.200L5.800 3.300L5.800 4.800L1 2.400L.8 5L2.600 6.700L2.600 7.500L0 6.900L-2.600 7.500L-2.600 6.700L-.8 5L-1 2.400L-5.800 4.800L-5.800 3.300L-1 -1.200L-.9 -5.500Z" fill="#1a1a62" stroke="#1a1a62" stroke-width=".5"/></g><g transform="translate(730 886) rotate(255) scale(0.792 1.2)"><path d="M0 -7.500L.9 -5.500L1 -1.200L5.800 3.300L5.800 4.800L1 2.400L.8 5L2.600 6.700L2.600 7.500L0 6.900L-2.600 7.500L-2.600 6.700L-.8 5L-1 2.400L-5.800 4.800L-5.800 3.300L-1 -1.200L-.9 -5.500Z" fill="#fff" stroke="#fff" stroke-width="2.600" stroke-linejoin="round" opacity=".9"/><path d="M0 -7.500L.9 -5.500L1 -1.200L5.800 3.300L5.800 4.800L1 2.400L.8 5L2.600 6.700L2.600 7.500L0 6.900L-2.600 7.500L-2.600 6.700L-.8 5L-1 2.400L-5.800 4.800L-5.800 3.300L-1 -1.200L-.9 -5.500Z" fill="#1a1a62" stroke="#1a1a62" stroke-width=".5"/></g><g transform="translate(655 885) rotate(232) scale(0.792 1.2)"><path d="M0 -7.500L.9 -5.500L1 -1.200L5.800 3.300L5.800 4.800L1 2.400L.8 5L2.600 6.700L2.600 7.500L0 6.900L-2.600 7.500L-2.600 6.700L-.8 5L-1 2.400L-5.800 4.800L-5.800 3.300L-1 -1.200L-.9 -5.500Z" fill="#fff" stroke="#fff" stroke-width="2.600" stroke-linejoin="round" opacity=".9"/><path d="M0 -7.500L.9 -5.500L1 -1.200L5.800 3.300L5.800 4.800L1 2.400L.8 5L2.600 6.700L2.600 7.500L0 6.900L-2.600 7.500L-2.600 6.700L-.8 5L-1 2.400L-5.800 4.800L-5.800 3.300L-1 -1.200L-.9 -5.500Z" fill="#1a1a62" stroke="#1a1a62" stroke-width=".5"/></g><g transform="translate(548 904) rotate(305) scale(0.792 1.2)"><path d="M0 -7.500L.9 -5.500L1 -1.200L5.800 3.300L5.800 4.800L1 2.400L.8 5L2.600 6.700L2.600 7.500L0 6.900L-2.600 7.500L-2.600 6.700L-.8 5L-1 2.400L-5.800 4.800L-5.800 3.300L-1 -1.200L-.9 -5.500Z" fill="#fff" stroke="#fff" stroke-width="2.600" stroke-linejoin="round" opacity=".9"/><path d="M0 -7.500L.9 -5.500L1 -1.200L5.800 3.300L5.800 4.800L1 2.400L.8 5L2.600 6.700L2.600 7.500L0 6.900L-2.600 7.500L-2.600 6.700L-.8 5L-1 2.400L-5.800 4.800L-5.800 3.300L-1 -1.200L-.9 -5.500Z" fill="#1a1a62" stroke="#1a1a62" stroke-width=".5"/></g><g transform="translate(534 880) rotate(245) scale(0.825 1.25)"><path d="M0 -7.500L.9 -5.500L1 -1.200L5.800 3.300L5.800 4.800L1 2.400L.8 5L2.600 6.700L2.600 7.500L0 6.900L-2.600 7.500L-2.600 6.700L-.8 5L-1 2.400L-5.800 4.800L-5.800 3.300L-1 -1.200L-.9 -5.500Z" fill="#fff" stroke="#fff" stroke-width="2.600" stroke-linejoin="round" opacity=".9"/><path d="M0 -7.500L.9 -5.500L1 -1.200L5.800 3.300L5.800 4.800L1 2.400L.8 5L2.600 6.700L2.600 7.500L0 6.900L-2.600 7.500L-2.600 6.700L-.8 5L-1 2.400L-5.800 4.800L-5.800 3.300L-1 -1.200L-.9 -5.500Z" fill="#1a1a62" stroke="#1a1a62" stroke-width=".5"/></g><g transform="translate(521 887) rotate(245) scale(0.825 1.25)"><path d="M0 -7.500L.9 -5.500L1 -1.200L5.800 3.300L5.800 4.800L1 2.400L.8 5L2.600 6.700L2.600 7.500L0 6.900L-2.600 7.500L-2.600 6.700L-.8 5L-1 2.400L-5.800 4.800L-5.800 3.300L-1 -1.200L-.9 -5.500Z" fill="#fff" stroke="#fff" stroke-width="2.600" stroke-linejoin="round" opacity=".9"/><path d="M0 -7.500L.9 -5.500L1 -1.200L5.800 3.300L5.800 4.800L1 2.400L.8 5L2.600 6.700L2.600 7.500L0 6.900L-2.600 7.500L-2.600 6.700L-.8 5L-1 2.400L-5.800 4.800L-5.800 3.300L-1 -1.200L-.9 -5.500Z" fill="#1a1a62" stroke="#1a1a62" stroke-width=".5"/></g><g transform="translate(509 892) rotate(245) scale(0.825 1.25)"><path d="M0 -7.500L.9 -5.500L1 -1.200L5.800 3.300L5.800 4.800L1 2.400L.8 5L2.600 6.700L2.600 7.500L0 6.900L-2.600 7.500L-2.600 6.700L-.8 5L-1 2.400L-5.800 4.800L-5.800 3.300L-1 -1.200L-.9 -5.500Z" fill="#fff" stroke="#fff" stroke-width="2.600" stroke-linejoin="round" opacity=".9"/><path d="M0 -7.500L.9 -5.500L1 -1.200L5.800 3.300L5.800 4.800L1 2.400L.8 5L2.600 6.700L2.600 7.500L0 6.900L-2.600 7.500L-2.600 6.700L-.8 5L-1 2.400L-5.800 4.800L-5.800 3.300L-1 -1.200L-.9 -5.500Z" fill="#1a1a62" stroke="#1a1a62" stroke-width=".5"/></g><text x="465" y="393" font-family="DejaVu Sans,sans-serif" font-size="9.6" fill="#38106a" letter-spacing="0.83">VTK1019</text><text x="951" y="785" font-family="DejaVu Sans,sans-serif" font-size="9.6" fill="#24146a" letter-spacing="1.03">JC626</text><text x="809" y="843" font-family="DejaVu Sans,sans-serif" font-size="9.6" fill="#24146a" letter-spacing="1.04">CPA530</text><text x="747" y="874" font-family="DejaVu Sans,sans-serif" font-size="9.6" fill="#24146a" letter-spacing="1.04">CPA526</text><text x="807" y="910" font-family="DejaVu Sans,sans-serif" font-size="9.6" fill="#24146a" letter-spacing="0.85">CAL9953</text><text x="706" y="906" font-family="DejaVu Sans,sans-serif" font-size="9.6" fill="#24146a" letter-spacing="0.85">CAL9991</text><text x="634" y="906" font-family="DejaVu Sans,sans-serif" font-size="9.6" fill="#24146a" letter-spacing="1.04">CPA521</text><text x="562" y="909" font-family="DejaVu Sans,sans-serif" font-size="9.6" fill="#24146a" letter-spacing="0.80">UAL6886</text><text x="507" y="873" font-family="DejaVu Sans,sans-serif" font-size="9.6" fill="#5a2a6a" letter-spacing="0.68">CAL903</text><text x="502" y="905" font-family="DejaVu Sans,sans-serif" font-size="9.6" fill="#24146a" letter-spacing="0.65">RSU218</text><text x="487" y="914" font-family="DejaVu Sans,sans-serif" font-size="9.6" fill="#24146a" letter-spacing="0.51">CAL657</text><text x="500" y="914" font-family="DejaVu Sans,sans-serif" font-size="9.6" fill="#24146a" letter-spacing="-0.34">UAL5723</text></svg>
<div class="a" style="left:488px;top:400px;width:168px;height:57px;background:#ffffe1;border:1px solid #a8a898;"></div>
<div class="t" style="left:491px;top:402px;font-size:11px;color:#000;transform:scaleX(0.9341);transform-origin:0 0;">VTK1019 (Victor Kuznecov UHBB)</div>
<div class="t" style="left:491px;top:415px;font-size:11px;color:#000;transform:scaleX(0.9365);transform-origin:0 0;">UHHH Khabarovsk (Novy) - VHHX</div>
<div class="t" style="left:491px;top:428px;font-size:11px;color:#000;letter-spacing:0.055px;">Altitude: 34 800 feet</div>
<div class="t" style="left:491px;top:441px;font-size:11px;color:#000;transform:scaleX(0.9652);transform-origin:0 0;">Ground Speed: 406 knots</div>
<div class="a hatch" style="left:1659px;top:206px;width:16px;height:772px"></div>
<div class="btn" style="left:1659px;top:206px;width:16px;height:16px"></div>
<div class="btn" style="left:1659px;top:962px;width:16px;height:16px"></div>
<div class="btn" style="left:1659px;top:464px;width:16px;height:41px"></div>
<svg style="left:1663px;top:212px" width="7" height="4" viewBox="0 0 7 4"><path d="M0 3.500h7l-3.500-3.500z" fill="#000"/></svg>
<svg style="left:1663px;top:968px" width="7" height="4" viewBox="0 0 7 4"><path d="M0 0h7l-3.500 3.500z" fill="#000"/></svg>
<div class="a" style="left:1677px;top:172px;width:1px;height:828px;background:#c8c6c8"></div>
<div class="a hatch" style="left:6px;top:974px;width:1652px;height:16px"></div>
<div class="btn" style="left:8px;top:975px;width:17px;height:14px"></div>
<div class="btn" style="left:1641px;top:975px;width:17px;height:14px"></div>
<div class="btn" style="left:1310px;top:975px;width:98px;height:14px"></div>
<svg style="left:15px;top:978px" width="4" height="7" viewBox="0 0 4 7"><path d="M3.500 0v7l-3.500-3.500z" fill="#000"/></svg>
<svg style="left:1648px;top:978px" width="4" height="7" viewBox="0 0 4 7"><path d="M0 0v7l3.500-3.500z" fill="#000"/></svg>
<div class="a" style="left:1px;top:172px;width:2px;height:828px;background:linear-gradient(90deg,#fff,#f6f5f7)"></div>
<div class="a" style="left:0;top:999.500px;width:1680px;height:2px;background:#959395"></div>
<div class="a" style="left:0;top:1001.500px;width:1680px;height:1px;background:#fff"></div>
<div class="flat" style="left:1px;top:1003px;width:669px;height:17px"></div>
<div class="flat" style="left:673px;top:1003px;width:553px;height:17px"></div>
<div class="flat" style="left:1228px;top:1003px;width:345px;height:17px"></div>
<div class="flat" style="left:1575px;top:1003px;width:104px;height:17px"></div>
<div class="t" style="left:5px;top:1005px;font-size:11px;color:#000;transform:scaleX(0.9794);transform-origin:0 0;">VATSIM data last updated at 03.05.2009 01:23</div>
<div class="t" style="left:677px;top:1005px;font-size:11px;color:#000;transform:scaleX(0.9694);transform-origin:0 0;">N28 59.9   E113 39.8</div>
<div class="t" style="left:1232px;top:1005px;font-size:11px;color:#000;transform:scaleX(0.9798);transform-origin:0 0;">ATC &amp; Pilots connected: 679</div>
<div class="t" style="left:1579px;top:1005px;font-size:11px;color:#000;transform:scaleX(0.9598);transform-origin:0 0;">MANUAL</div>
<div class="a" style="left:0;top:1020px;width:1680px;height:30px;background:linear-gradient(#1f3f80 0,#1f3f80 1px,#9cc8ff 1px,#9cc8ff 2px,#84c2ee 2.500px,#6eace6 9px,#5a98e0 15.500px,#3c78cc 16px,#3468c0 23px,#2c54b0 29px,#1f409a 30px)"></div>
<div class="a" style="left:0;top:1021px;width:97px;height:29px;border-radius:0 13px 9px 0;background:linear-gradient(#d8f8e8 0,#d8f8e8 1px,#84ca84 1.500px,#5cb45c 7px,#3cac4c 14.500px,#109028 15px,#14a420 22px,#10c418 29px);border-right:1px solid #a8ecc0;box-shadow:1px 0 1px #2a4a8a"></div>
<svg style="left:10px;top:1025px" width="19" height="19" viewBox="0 0 19 19"><path d="M2 3c2-1.500 4-1.500 6 0l-1.500 5.500c-2-1.500-4-1.500-6 0z" fill="#e8502a"/><path d="M9.500 3.500c2 1.500 4 1.500 6 0l-1.500 5.500c-2 1.500-4 1.500-6 0z" fill="#7ac040"/><path d="M0 10c2-1.500 4-1.500 6 0l-1.500 5.500c-2-1.500-4-1.500-6 0z" fill="#4a8ae8" transform="translate(.5 0)"/><path d="M7.500 10.500c2 1.500 4 1.500 6 0l-1.500 5.500c-2 1.500-4 1.500-6 0z" fill="#f8c830"/></svg>
<div class="t" style="left:34.5px;top:1025px;font-size:17px;color:#fff;font-weight:bold;font-style:italic;letter-spacing:0.022px;text-shadow:1px 1px 1px #1a4a1a;">пуск</div>
<svg style="left:107px;top:1024px" width="20" height="22" viewBox="0 0 20 22"><text x="3.500" y="18" font-size="21" font-weight="bold" fill="#2a8cf0" stroke="#60c0ff" stroke-width=".5" font-family="Liberation Sans,sans-serif">e</text><path d="M2.500 17C0 13 6 5 16 3.500" stroke="#a88420" stroke-width="2.600" fill="none"/><path d="M2.500 17C0 13 6 5 16 3.500" stroke="#f8d048" stroke-width="1.400" fill="none"/></svg>
<svg style="left:131px;top:1028px" width="17" height="14" viewBox="0 0 17 14"><rect x=".5" y=".5" width="16" height="13" fill="#3060c8" stroke="#a8c8f4"/><path d="M1 1h15v8h-15z" fill="#3a6cd4"/><path d="M9 1h7v6z" fill="#5a8ae4"/><rect x="1" y="10" width="15" height="2.500" fill="#283040"/><rect x="3" y="9.500" width="2" height="2" fill="#f0d040"/></svg>
<svg style="left:154px;top:1026px" width="17" height="18" viewBox="0 0 17 18"><defs><radialGradient id="gl" cx=".4" cy=".3" r=".7"><stop offset="0" stop-color="#b0ecff"/><stop offset=".45" stop-color="#3a80e0"/><stop offset="1" stop-color="#102880"/></radialGradient></defs><circle cx="8.500" cy="9" r="7.500" fill="url(#gl)"/><path d="M3 5c2-3 5-3 6-2l-2 3-2 3-2-1zM6 11l3 1 2 3-3 1-2-2zM12 4l2.500 3-1 3-1.500-3z" fill="#30b030" opacity=".85"/></svg>
<div class="t" style="left:181.5px;top:1020px;font-size:14px;color:#fff;transform:scaleX(1.2);transform-origin:0 0;">»</div>
<div class="a" style="left:201px;top:1024px;width:157px;height:24px;border-radius:3px;border:1px solid rgba(20,60,150,.55);border-top-color:rgba(60,100,180,.5);border-bottom-color:#0c3080;box-shadow:inset 1px 1px 0 rgba(255,255,255,.22)"></div>
<div class="t" style="left:229px;top:1029px;font-size:11px;color:#fff;transform:scaleX(0.9705);transform-origin:0 0;">ASv6.5 - FS Active</div>
<div class="a" style="left:360px;top:1024px;width:157px;height:24px;border-radius:3px;border:1px solid rgba(20,60,150,.55);border-top-color:rgba(60,100,180,.5);border-bottom-color:#0c3080;box-shadow:inset 1px 1px 0 rgba(255,255,255,.22)"></div>
<div class="t" style="left:389px;top:1029px;font-size:11px;color:#fff;transform:scaleX(0.9711);transform-origin:0 0;">Microsoft Flight Simul...</div>
<div class="a" style="left:520px;top:1024px;width:157px;height:24px;border-radius:3px;background:linear-gradient(#3a62b0 0,#2a509e 11px,#16388a 12px,#1a3c8c 22px);border:1px solid #081c60;border-bottom-color:#a0c0f0;box-shadow:inset 1px 1px 1px #0a2468"></div>
<div class="t" style="left:550px;top:1029px;font-size:11px;color:#fff;letter-spacing:0.129px;">ServInfo</div>
<div class="a" style="left:681px;top:1024px;width:157px;height:24px;border-radius:3px;border:1px solid rgba(20,60,150,.55);border-top-color:rgba(60,100,180,.5);border-bottom-color:#0c3080;box-shadow:inset 1px 1px 0 rgba(255,255,255,.22)"></div>
<div class="t" style="left:709px;top:1029px;font-size:11px;color:#fff;letter-spacing:0.105px;">Документ Microsoft ...</div>
<svg style="left:208px;top:1027px" width="17" height="17" viewBox="0 0 17 17"><defs><radialGradient id="as6"><stop offset="0" stop-color="#a098ff"/><stop offset="1" stop-color="#4030c0"/></radialGradient></defs><rect width="17" height="17" fill="url(#as6)"/><text x="8.500" y="11.500" font-size="7.500" font-weight="bold" font-style="italic" text-anchor="middle" fill="#18185c" font-family="Liberation Sans,sans-serif">AS6</text></svg>
<svg style="left:368px;top:1028px" width="17" height="15" viewBox="0 0 17 15"><path d="M1 2l3 0 3 4 6-1c3 0 3 2 0 2.500l-5 1-3 5-2 0 2-5-3 .5-2-1 3-1.500z" fill="#303848" stroke="#a0a8b8" stroke-width=".5"/></svg>
<svg style="left:529px;top:1027px" width="17" height="17" viewBox="0 0 17 17"><rect x="0" y="0" width="12" height="12" fill="#2a9a2a"/><path d="M2 4h8M5 2l2 4-2 3" stroke="#dfe" stroke-width="1.200" fill="none"/><circle cx="11.500" cy="12" r="4.200" fill="#fff" stroke="#223" stroke-width="1"/><rect x="10.800" y="11" width="1.600" height="3.600" fill="#12127a"/><rect x="10.800" y="9" width="1.600" height="1.400" fill="#12127a"/></svg>
<svg style="left:688px;top:1027px" width="17" height="17" viewBox="0 0 17 17"><path d="M4 1h9l3 3v12h-12z" fill="#fff" stroke="#8898b8"/><rect x="0" y="3" width="10" height="10" fill="#2a4aa8"/><text x="5" y="11" font-size="9" font-weight="bold" text-anchor="middle" fill="#fff" font-family="Liberation Sans,sans-serif">W</text></svg>
<div class="t" style="left:1462px;top:1029px;font-size:11px;color:#fff;transform:scaleX(0.8812);transform-origin:0 0;">RU</div>
<div class="a" style="left:1460px;top:1027px;width:17px;height:16px;background:#2a55b8;opacity:.6"></div>
<div class="t" style="left:1462px;top:1029px;font-size:11px;color:#fff;transform:scaleX(0.8812);transform-origin:0 0;">RU</div>
<div class="a" style="left:1497px;top:1020px;width:183px;height:30px;background:linear-gradient(#f6f9ff 0,#e0e9f9 7px,#bccff0 14px,#94b4e8 21px,#6a98dc 29px);border-top:1px solid #4a5a6a"></div>
<svg style="left:1488px;top:1026px" width="19" height="19" viewBox="0 0 19 19"><circle cx="9.500" cy="9.500" r="8.500" fill="#d8e4f8" stroke="#6888d0" stroke-width="1.300"/><path d="M11 5.500l-4 4 4 4" stroke="#2a4aa8" stroke-width="2" fill="none"/></svg>
<svg style="left:1507px;top:1026px" width="17" height="17" viewBox="0 0 17 17"><rect x="1" y="1" width="6" height="6" fill="none" stroke="#e85020" stroke-width="1.800"/><rect x="9" y="4" width="6" height="5" fill="none" stroke="#3878d8" stroke-width="1.800"/><rect x="2" y="10" width="5" height="5" fill="none" stroke="#f0b020" stroke-width="1.800"/><rect x="9" y="10" width="6" height="5" fill="none" stroke="#58a838" stroke-width="1.800"/></svg>
<svg style="left:1526px;top:1026px" width="17" height="17" viewBox="0 0 17 17"><circle cx="8.500" cy="8.500" r="8" fill="#283858"/><path d="M3 3a8 8 0 0 1 11 0" stroke="#5878a8" stroke-width="1.500" fill="none"/><path d="M15 5.500c.8-.8-.3-1.800-1.300-1l-3 2.300-5.700-1-.8.800 4.300 2.200-2.500 2.200-2-.3-.6.600 2.500 1.200 1.200 2.500.6-.6-.3-2 2.200-2.500 2.200 4.300.8-.8-1-5.700z" fill="#fff"/></svg>
<svg style="left:1544px;top:1026px" width="17" height="18" viewBox="0 0 17 18"><rect x="6" y="1" width="10" height="8" fill="#48a0f0" stroke="#2060b0"/><rect x="1" y="6" width="10" height="8" fill="#58b0f8" stroke="#2060b0"/><rect x="4" y="15" width="5" height="1.500" fill="#405070"/></svg>
<svg style="left:1562px;top:1026px" width="18" height="18" viewBox="0 0 18 18"><rect x="6" y="1" width="10" height="8" fill="#303030" stroke="#707070"/><rect x="1" y="6" width="10" height="8" fill="#383838" stroke="#707070"/><path d="M12 9l5 8h-10z" fill="#f8d820" stroke="#504000" stroke-width=".6"/><rect x="11.600" y="11.500" width="1" height="3" fill="#000"/></svg>
<svg style="left:1580px;top:1026px" width="17" height="17" viewBox="0 0 17 17"><rect x="1" y="1" width="15" height="15" fill="#b0c0d8" stroke="#5070a0"/><rect x="4" y="1" width="8" height="5" fill="#e8f0f8"/><path d="M2 11h8v-3l5 4.500-5 4.500v-3h-8z" fill="#2080e8" stroke="#1050a0" stroke-width=".6"/></svg>
<div class="a" style="left:1598px;top:1027px;width:16px;height:16px;background:#00007c"></div>
<div class="t" style="left:1599px;top:1028px;font-size:12px;color:#fff;transform:scaleX(0.8474);transform-origin:0 0;">Ru</div>
<div class="a" style="left:1617px;top:1027px;width:15px;height:16px;background:#0000e0"></div>
<svg style="left:1617px;top:1027px" width="15" height="16" viewBox="0 0 15 16"><path d="M4 3v10l8-5z" fill="#fff"/><path d="M0 16L4 0" stroke="#fff" stroke-width="1"/></svg>
<div class="t" style="left:1643px;top:1029px;font-size:11px;color:#000;transform:scaleX(0.9809);transform-origin:0 0;">1:24</div>
<div class="a" style="left:1367px;top:95px;width:298px;height:597px;background:#5a8ce0;border:1px solid #2a4a9c;border-radius:7px 7px 0 0;"></div>
<div class="a" style="left:1368px;top:96px;width:296px;height:28px;border-radius:6px 6px 0 0;background:linear-gradient(#6aa6ea 0,#7ab6ee 2px,#6ba4e9 5px,#4a84dc 9px,#3468cc 14px,#2c5cc0 20px,#2f5abc 28px)"></div>
<div class="a" style="left:1370px;top:124px;width:292px;height:565px;background:#ebe9ed"></div>
<div class="t" style="left:1374.5px;top:103.5px;font-size:13.5px;color:#fff;font-weight:bold;transform:scaleX(0.9684);transform-origin:0 0;text-shadow:1px 1px 0 #1a3a88;">Flight Details for VTK1019</div>
<div class="a" style="left:1640px;top:101px;width:20px;height:20px;border:1px solid #f0e8e0;border-radius:3px;background:linear-gradient(135deg,#e08868,#c8482c 50%,#b83c20)"></div>
<svg style="left:1640px;top:101px" width="20" height="20" viewBox="0 0 20 20"><path d="M5 5l10 10M15 5L5 15" stroke="#fff" stroke-width="2.200"/></svg>
<div class="t" style="left:1383.8px;top:130.9px;font-size:12px;color:#000;transform:scaleX(0.8390);transform-origin:0 0;">Captain:</div>
<div class="t" style="left:1430px;top:130.9px;font-size:12px;color:#000080;transform:scaleX(0.9017);transform-origin:0 0;text-decoration:underline;white-space:pre;">Victor Kuznecov </div>
<div class="t" style="left:1590px;top:125.3px;font-size:12px;color:#000;transform:scaleX(0.8734);transform-origin:0 0;">Time Logged:</div>
<div class="t" style="left:1606px;top:138.9px;font-size:12px;color:#000;transform:scaleX(0.8745);transform-origin:0 0;">5 h 53 min</div>
<div class="grp" style="left:1373px;top:156px;width:284px;height:70px"></div>
<div class="a" style="left:1379px;top:150px;width:88px;height:13px;background:#ebe9ed"></div>
<div class="t" style="left:1381px;top:150.3px;font-size:12px;color:#000080;font-weight:bold;transform:scaleX(0.9875);transform-origin:0 0;">Aircraft Details</div>
<div class="t" style="left:1383px;top:165.3px;font-size:12px;color:#000;font-weight:bold;letter-spacing:0.748px;">H/IL76/A</div>
<div class="t" style="left:1560.4px;top:165.3px;font-size:12px;color:#000080;transform:scaleX(0.8974);transform-origin:0 0;">4 J H III 3000 2500</div>
<div class="t" style="left:1383px;top:180.1px;font-size:12px;color:#000;transform:scaleX(0.8995);transform-origin:0 0;">Ilyushin: Il-76 / 78</div>
<div class="a" style="left:1384px;top:202px;width:85px;height:18px;background:#fff"></div>
<svg style="left:1384px;top:202px" width="85" height="18" viewBox="0 0 85 18"><g fill="none" stroke="#3848a8" stroke-width="1.100"><ellipse cx="17" cy="10" rx="8.500" ry="5.500" transform="rotate(12 17 10)"/><path d="M11 4c5-3 11-1 13 3M9.500 8c4-3 10-3 14 1M12 14c2-3 3-6 2-9M17 15.500c2-3 3-6 2-10M10 11c4 1 9 1 13-1" stroke-width=".8"/><path d="M12 1.500c3 .5 6 2 8 4" stroke-width="1.300"/></g><path d="M76.500 0.500h8.500l-6 17h-8.500z" fill="#2838b8"/><path d="M81 0.500l-6 17" stroke="#fff" stroke-width="1"/></svg>
<div class="t" style="left:1412px;top:202.8px;font-size:4px;color:#4858b0;font-weight:bold;font-style:italic;letter-spacing:0.430px;">АВИАКОМПАНИЯ</div>
<div class="t" style="left:1413.5px;top:205.2px;font-size:14px;color:#2838a8;font-weight:bold;font-style:italic;transform:scaleX(.6);transform-origin:0 0;-webkit-text-stroke:.6px #2838a8;">ВОСТОК</div>
<div class="t" style="left:1472.8px;top:197.6px;font-size:12px;color:#000;transform:scaleX(0.8905);transform-origin:0 0;">Vostok Airlines</div>
<div class="t" style="left:1472.8px;top:210.0px;font-size:12px;color:#000;transform:scaleX(0.9276);transform-origin:0 0;">[Vostok]</div>
<div class="grp" style="left:1373px;top:240px;width:284px;height:180px"></div>
<div class="a" style="left:1379px;top:234px;width:107px;height:13px;background:#ebe9ed"></div>
<div class="t" style="left:1381px;top:234.2px;font-size:12px;color:#000080;font-weight:bold;transform:scaleX(0.9902);transform-origin:0 0;">Flight Plan Details</div>
<div class="t" style="left:1387.6px;top:251.3px;font-size:12px;color:#000;transform:scaleX(0.8891);transform-origin:0 0;">Route :</div>
<div class="t" style="left:1554.3px;top:251.3px;font-size:12px;color:#000;transform:scaleX(0.8826);transform-origin:0 0;">Flight Type :</div>
<div class="t" style="left:1615.6px;top:251.3px;font-size:12px;color:#000;font-weight:bold;transform:scaleX(0.9881);transform-origin:0 0;">IFR</div>
<div class="sunk" style="left:1386px;top:267px;width:264px;height:49px;background:#fff"></div>
<div class="a" style="left:1632px;top:269px;width:16px;height:45px;background:linear-gradient(90deg,#f4f6fc,#e4eafa)"></div>
<div class="a" style="left:1633px;top:270px;width:14px;height:15px;border:1px solid #c4d0f0;border-radius:2px;background:linear-gradient(#f4f7fe,#d4def8)"></div>
<div class="a" style="left:1633px;top:298px;width:14px;height:15px;border:1px solid #c4d0f0;border-radius:2px;background:linear-gradient(#f4f7fe,#d4def8)"></div>
<svg style="left:1636px;top:274px" width="8" height="6" viewBox="0 0 8 6"><path d="M.5 5l3.500-3.500 3.500 3.500" stroke="#a8b8e0" stroke-width="1.800" fill="none"/></svg>
<svg style="left:1636px;top:303px" width="8" height="6" viewBox="0 0 8 6"><path d="M.5 1l3.500 3.500 3.500-3.500" stroke="#a8b8e0" stroke-width="1.800" fill="none"/></svg>
<div class="t" style="left:1389px;top:270.0px;font-size:12px;color:#000;transform:scaleX(0.8992);transform-origin:0 0;">UHHH SID ARGUK G212 CDY W41 VYK A461</div>
<div class="t" style="left:1389px;top:283.3px;font-size:12px;color:#000;transform:scaleX(0.8993);transform-origin:0 0;">LIG R473 BEMAG W43 CON W21 SAREX W7</div>
<div class="t" style="left:1389px;top:296.3px;font-size:12px;color:#000;transform:scaleX(0.9115);transform-origin:0 0;">ZUH R473 SIERA CH STAR VHHX</div>
<div class="t" style="left:1387.6px;top:323.9px;font-size:12px;color:#000;transform:scaleX(0.8961);transform-origin:0 0;">Flight Level / Altitude :</div>
<div class="t" style="left:1496.6px;top:323.9px;font-size:12px;color:#000;font-weight:bold;letter-spacing:0.023px;">FL310</div>
<div class="t" style="left:1387.6px;top:342.0px;font-size:12px;color:#000;transform:scaleX(0.8629);transform-origin:0 0;">Cruising Speed (TAS) :</div>
<div class="t" style="left:1497.7px;top:342.0px;font-size:12px;color:#000;font-weight:bold;letter-spacing:0.093px;">430</div>
<div class="t" style="left:1387.6px;top:362.3px;font-size:12px;color:#000;transform:scaleX(0.8567);transform-origin:0 0;">Pilot&#x27;s Remarks :</div>
<div class="sunk" style="left:1386px;top:377px;width:264px;height:31px;background:#c8c8c8"></div>
<div class="a" style="left:1632px;top:379px;width:16px;height:27px;background:linear-gradient(90deg,#f4f6fc,#e4eafa)"></div>
<div class="a" style="left:1633px;top:380px;width:14px;height:12px;border:1px solid #c4d0f0;border-radius:2px;background:linear-gradient(#f4f7fe,#d4def8)"></div>
<div class="a" style="left:1633px;top:393px;width:14px;height:12px;border:1px solid #c4d0f0;border-radius:2px;background:linear-gradient(#f4f7fe,#d4def8)"></div>
<svg style="left:1636px;top:383px" width="8" height="6" viewBox="0 0 8 6"><path d="M.5 5l3.500-3.500 3.500 3.500" stroke="#b8c4e4" stroke-width="1.600" fill="none"/></svg>
<svg style="left:1636px;top:396px" width="8" height="6" viewBox="0 0 8 6"><path d="M.5 1l3.500 3.500 3.500-3.500" stroke="#b8c4e4" stroke-width="1.600" fill="none"/></svg>
<div class="t" style="left:1389.5px;top:380.1px;font-size:12px;color:#787878;letter-spacing:0.734px;">/T/</div>
<div class="grp" style="left:1373px;top:433px;width:284px;height:228px"></div>
<div class="a" style="left:1379px;top:427px;width:118px;height:13px;background:#ebe9ed"></div>
<div class="t" style="left:1381px;top:426.8px;font-size:12px;color:#000080;font-weight:bold;transform:scaleX(0.9883);transform-origin:0 0;">Actual Flight Details</div>
<div class="t" style="left:1382.5px;top:444.2px;font-size:12px;color:#000;transform:scaleX(0.8539);transform-origin:0 0;">Flight Status:</div>
<div class="t" style="left:1447px;top:444.2px;font-size:12px;color:#0000c0;font-weight:bold;transform:scaleX(0.9459);transform-origin:0 0;">Airborne</div>
<div class="t" style="left:1379px;top:461.9px;font-size:12px;color:#108010;transform:scaleX(0.9231);transform-origin:0 0;text-decoration:underline;">UHHH</div>
<div class="t" style="left:1619px;top:461.9px;font-size:12px;color:#a01010;transform:scaleX(0.9148);transform-origin:0 0;">VHHX</div>
<div class="a" style="left:1379px;top:477px;width:270px;height:10px;border:1px solid;border-color:#8c8a8c #fff #fff #8c8a8c;"></div>
<div class="t" style="left:1382.5px;top:490.3px;font-size:12px;color:#606060;transform:scaleX(0.8394);transform-origin:0 0;">Currently in :</div>
<div class="t" style="left:1446.7px;top:490.3px;font-size:12px;color:#901010;transform:scaleX(0.8834);transform-origin:0 0;">Guangzhou FIR (ZGZU)</div>
<div class="t" style="left:1382.5px;top:507.0px;font-size:12px;color:#606060;transform:scaleX(0.8566);transform-origin:0 0;">Closest airport (within 100 nm) :</div>
<div class="t" style="left:1534.9px;top:507.0px;font-size:12px;color:#901010;transform:scaleX(0.8550);transform-origin:0 0;">ZGCS</div>
<div class="t" style="left:1382.5px;top:519.6px;font-size:12px;color:#901010;transform:scaleX(0.8696);transform-origin:0 0;">Changsha, China (60 nm)</div>
<div class="t" style="left:1382.5px;top:538.1px;font-size:12px;color:#000;transform:scaleX(0.8554);transform-origin:0 0;">Distance from Origin (nm) :</div>
<div class="t" style="left:1535.6px;top:538.1px;font-size:12px;color:#000;font-weight:bold;transform:scaleX(0.9889);transform-origin:0 0;">1531</div>
<div class="t" style="left:1382.5px;top:552.3px;font-size:12px;color:#000;transform:scaleX(0.8654);transform-origin:0 0;">Distance from Destination (nm) :</div>
<div class="t" style="left:1535.6px;top:552.3px;font-size:12px;color:#000;font-weight:bold;letter-spacing:0.578px;">N/A</div>
<div class="t" style="left:1382px;top:621.0px;font-size:12px;color:#000;transform:scaleX(0.8673);transform-origin:0 0;">Altitude :</div>
<div class="t" style="left:1425.7px;top:621.0px;font-size:12px;color:#000;font-weight:bold;letter-spacing:0.266px;">34773</div>
<div class="t" style="left:1491.4px;top:621.0px;font-size:12px;color:#000;transform:scaleX(0.8767);transform-origin:0 0;white-space:pre;">Ground Speed  :</div>
<div class="t" style="left:1575.8px;top:621.0px;font-size:12px;color:#000;font-weight:bold;letter-spacing:0.259px;">406</div>
<div class="t" style="left:1382.5px;top:642.9px;font-size:12px;color:#000;transform:scaleX(0.8872);transform-origin:0 0;">Squawk Code :</div>
<div class="t" style="left:1460px;top:642.9px;font-size:12px;color:#000;font-weight:bold;letter-spacing:0.076px;">4314</div>
<div class="btn" style="left:1631px;top:636px;width:20px;height:20px"></div>
<svg style="left:1633px;top:638px" width="17" height="17" viewBox="0 0 17 17"><circle cx="7.500" cy="7.500" r="6.500" fill="#101898" stroke="#000" stroke-width="1"/><path d="M3 4c2-2 5-2 7-1l-3 2-2 3zM4 10l3 1 1 3-3-1z" fill="#18a838"/><circle cx="9.500" cy="9" r="3.300" fill="#c8f0f8" stroke="#fff" stroke-width="1"/><path d="M12 11.500l3.500 4" stroke="#d02020" stroke-width="2"/></svg>
<div class="t" style="left:1376.2px;top:669.3px;font-size:12px;color:#000;transform:scaleX(0.8820);transform-origin:0 0;">Connected to EUROPE-C2 server</div>
<div class="t" style="left:1558.5px;top:669.3px;font-size:12px;color:#000;transform:scaleX(0.8979);transform-origin:0 0;">PID: 1085725</div>
<div class="btn" style="left:1635px;top:667px;width:20px;height:20px"></div>
<svg style="left:1637px;top:669px" width="16" height="16" viewBox="0 0 16 16"><path d="M1.500 1.500h13v10h-5l-0 3-3-3h-5z" fill="#f8f8c8" stroke="#000" stroke-width="1.100"/><text x="8" y="10" font-size="9" font-weight="bold" text-anchor="middle" fill="#101080" font-family="Liberation Sans,sans-serif">?</text></svg>
</div></body></html>
